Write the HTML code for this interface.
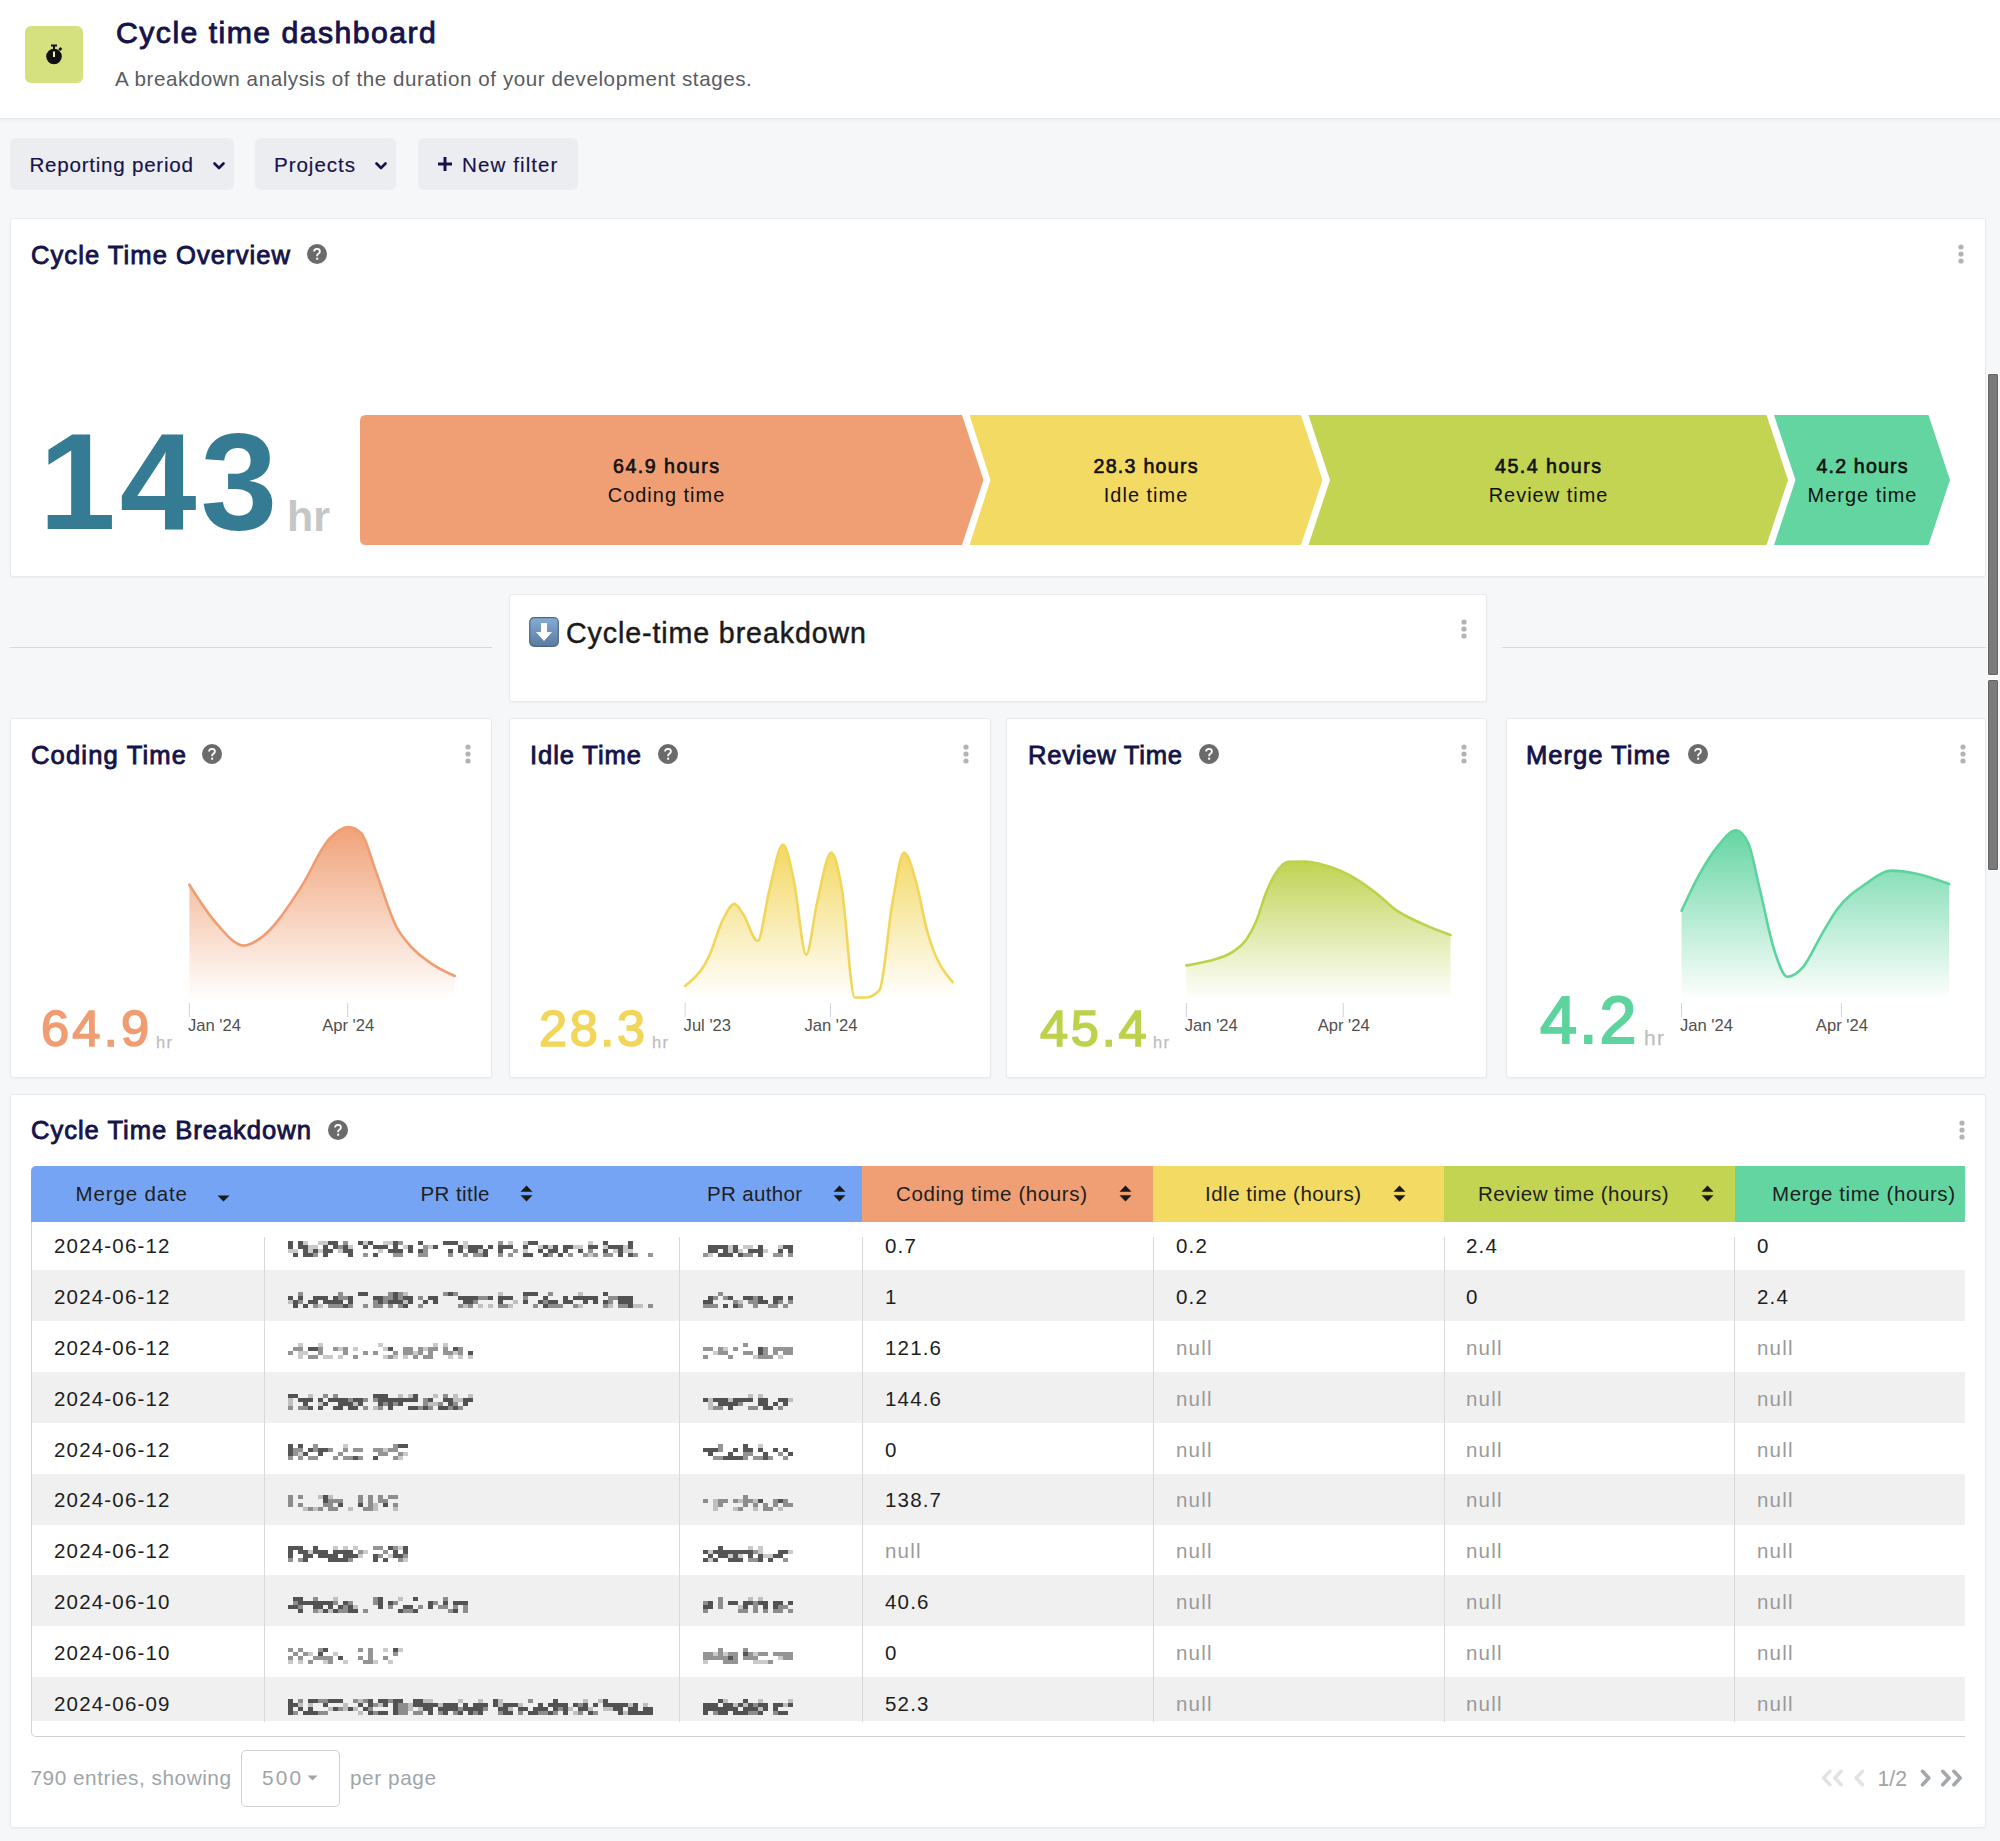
<!DOCTYPE html>
<html><head><meta charset="utf-8"><title>Cycle time dashboard</title><style>
*{margin:0;padding:0;box-sizing:border-box}
html,body{width:2000px;height:1841px;overflow:hidden;background:#f6f7f9;font-family:"Liberation Sans",sans-serif}
.t{position:absolute;white-space:nowrap}
.r{position:absolute}
.card{position:absolute;background:#fff;border:1px solid #e9eaed;border-radius:3px;box-shadow:0 1px 2px rgba(0,0,0,0.04)}
.blur{filter:blur(1.1px)}
</style></head><body>
<div class="r" style="left:0px;top:0px;width:2000px;height:118.5px;background:#fff;border-bottom:1px solid #e5e6e8;box-shadow:0 2px 4px rgba(0,0,0,0.04)"></div>
<div class="r" style="left:25px;top:26px;width:58px;height:57px;background:#d5e07f;border-radius:6px"></div>
<svg class="r" style="left:44px;top:43px" width="20" height="24" viewBox="0 0 20 24"><rect x="7" y="1.5" width="6" height="2" fill="#111"/><rect x="9" y="3" width="2" height="3" fill="#111"/><circle cx="10" cy="13.5" r="7.8" fill="#111"/><path d="M15.2 7.2 L17.4 5" stroke="#111" stroke-width="2.6"/><rect x="9" y="8.5" width="2" height="5.5" fill="#e9edc8"/></svg>
<div class="t" style="left:116.00px;top:18.24px;font-size:30.20px;line-height:30.20px;color:#15134a;font-weight:400;letter-spacing:1.469px;-webkit-text-stroke:0.9px #15134a;">Cycle time dashboard</div>
<div class="t" style="left:115.00px;top:69.16px;font-size:20.60px;line-height:20.60px;color:#585c62;font-weight:400;letter-spacing:0.568px;">A breakdown analysis of the duration of your development stages.</div>
<div class="r" style="left:10px;top:138px;width:224px;height:52px;background:#ecedf0;border-radius:6px"></div>
<div class="t" style="left:29.50px;top:154.66px;font-size:20.60px;line-height:20.60px;color:#15134a;font-weight:400;letter-spacing:0.746px;-webkit-text-stroke:0.15px #15134a;">Reporting period</div>
<svg class="r" style="left:212.5px;top:161.5px" width="12" height="8" viewBox="0 0 12 8"><path d="M1.5 1.5 L6 6 L10.5 1.5" fill="none" stroke="#15134a" stroke-width="2.6" stroke-linecap="round" stroke-linejoin="round"/></svg>
<div class="r" style="left:255px;top:138px;width:141px;height:52px;background:#ecedf0;border-radius:6px"></div>
<div class="t" style="left:274.00px;top:154.66px;font-size:20.60px;line-height:20.60px;color:#15134a;font-weight:400;letter-spacing:0.941px;-webkit-text-stroke:0.15px #15134a;">Projects</div>
<svg class="r" style="left:374.5px;top:161.5px" width="12" height="8" viewBox="0 0 12 8"><path d="M1.5 1.5 L6 6 L10.5 1.5" fill="none" stroke="#15134a" stroke-width="2.6" stroke-linecap="round" stroke-linejoin="round"/></svg>
<div class="r" style="left:418px;top:138px;width:160px;height:52px;background:#ecedf0;border-radius:6px"></div>
<svg class="r" style="left:437px;top:156px" width="16" height="16" viewBox="0 0 16 16"><path d="M8 1 V15 M1 8 H15" stroke="#15134a" stroke-width="3"/></svg>
<div class="t" style="left:462.00px;top:154.66px;font-size:20.60px;line-height:20.60px;color:#15134a;font-weight:400;letter-spacing:1.072px;-webkit-text-stroke:0.15px #15134a;">New filter</div>
<div class="card" style="left:9.5px;top:217.5px;width:1976.5px;height:359.5px"></div>
<div class="t" style="left:31.00px;top:242.53px;font-size:25.60px;line-height:25.60px;color:#15134a;font-weight:400;letter-spacing:1.033px;-webkit-text-stroke:0.85px #15134a;">Cycle Time Overview</div>
<svg class="r" style="left:307px;top:244px" width="20" height="20" viewBox="0 0 20 20"><circle cx="10" cy="10" r="10" fill="#6b6b6b"/><path d="M7.1 7.6 C7.1 5.9 8.4 4.9 10 4.9 C11.7 4.9 12.9 5.9 12.9 7.4 C12.9 8.6 12.2 9.2 11.3 9.8 C10.5 10.3 10.2 10.7 10.2 11.6 L10.2 12.2" fill="none" stroke="#fff" stroke-width="1.8"/><rect x="9.15" y="13.7" width="2" height="2" fill="#fff"/></svg>
<svg class="r" style="left:1957px;top:243px" width="8" height="22" viewBox="0 0 8 22"><circle cx="4" cy="4" r="2.6" fill="#b3b3b3"/><circle cx="4" cy="11" r="2.6" fill="#b3b3b3"/><circle cx="4" cy="18" r="2.6" fill="#b3b3b3"/></svg>
<div class="t" style="left:39.00px;top:412.28px;font-size:138.00px;line-height:138.00px;color:#347b93;font-weight:700;letter-spacing:4px;">143</div>
<div class="t" style="left:287.00px;top:495.20px;font-size:43.00px;line-height:43.00px;color:#c6c6c6;font-weight:700;">hr</div>
<svg class="r" style="left:0;top:0" width="2000" height="600" viewBox="0 0 2000 600"><path d="M366,415 L962,415 L983.5,480 L962,545 L366,545 Q360,545 360,539 L360,421 Q360,415 366,415 Z" fill="#f09f74"/><polygon points="969.5,415 1301,415 1322.5,480 1301,545 969.5,545 990.5,480" fill="#f3da62"/><polygon points="1308.5,415 1766.5,415 1788,480 1766.5,545 1308.5,545 1330,480" fill="#c2d452"/><polygon points="1774,415 1928.5,415 1950,480 1928.5,545 1774,545 1795.5,480" fill="#62d5a0"/></svg>
<div class="t" style="left:366.74px;width:600px;text-align:center;top:456.51px;font-size:19.60px;line-height:19.60px;color:#111;font-weight:400;letter-spacing:1.486px;-webkit-text-stroke:0.65px #111;">64.9 hours</div>
<div class="t" style="left:366.52px;width:600px;text-align:center;top:486.25px;font-size:19.90px;line-height:19.90px;color:#111;font-weight:400;letter-spacing:1.0311734375000015px;">Coding time</div>
<div class="t" style="left:846.13px;width:600px;text-align:center;top:456.51px;font-size:19.60px;line-height:19.60px;color:#111;font-weight:400;letter-spacing:1.264px;-webkit-text-stroke:0.65px #111;">28.3 hours</div>
<div class="t" style="left:846.02px;width:600px;text-align:center;top:486.25px;font-size:19.90px;line-height:19.90px;color:#111;font-weight:400;letter-spacing:1.0311734375000015px;">Idle time</div>
<div class="t" style="left:1248.74px;width:600px;text-align:center;top:456.51px;font-size:19.60px;line-height:19.60px;color:#111;font-weight:400;letter-spacing:1.486px;-webkit-text-stroke:0.65px #111;">45.4 hours</div>
<div class="t" style="left:1248.52px;width:600px;text-align:center;top:486.25px;font-size:19.90px;line-height:19.90px;color:#111;font-weight:400;letter-spacing:1.0311734375000015px;">Review time</div>
<div class="t" style="left:1562.58px;width:600px;text-align:center;top:456.51px;font-size:19.60px;line-height:19.60px;color:#111;font-weight:400;letter-spacing:1.16px;-webkit-text-stroke:0.65px #111;">4.2 hours</div>
<div class="t" style="left:1562.52px;width:600px;text-align:center;top:486.25px;font-size:19.90px;line-height:19.90px;color:#111;font-weight:400;letter-spacing:1.0311734375000015px;">Merge time</div>
<div class="r" style="left:10px;top:647px;width:482px;height:1px;background:#d6d8dc"></div>
<div class="r" style="left:1502px;top:647px;width:484px;height:1px;background:#d6d8dc"></div>
<div class="card" style="left:508.5px;top:593.5px;width:978px;height:108px"></div>
<svg class="r" style="left:529px;top:617px" width="30" height="30" viewBox="0 0 30 30"><defs><linearGradient id="eg" x1="0" y1="0" x2="0" y2="1"><stop offset="0" stop-color="#86acd6"/><stop offset="1" stop-color="#5a7b9e"/></linearGradient></defs><rect x="0.7" y="0.7" width="28.6" height="28.6" rx="4.5" fill="url(#eg)" stroke="#4a6785" stroke-width="1.2"/><path d="M12 6 H18 V15 H23 L15 24 L7 15 H12 Z" fill="#fff"/></svg>
<div class="t" style="left:566.00px;top:619.39px;font-size:28.60px;line-height:28.60px;color:#1a1a1a;font-weight:400;letter-spacing:0.898px;-webkit-text-stroke:0.45px #1a1a1a;">Cycle-time breakdown</div>
<svg class="r" style="left:1460px;top:618px" width="8" height="22" viewBox="0 0 8 22"><circle cx="4" cy="4" r="2.6" fill="#b3b3b3"/><circle cx="4" cy="11" r="2.6" fill="#b3b3b3"/><circle cx="4" cy="18" r="2.6" fill="#b3b3b3"/></svg>
<div class="card" style="left:9.5px;top:718px;width:482.5px;height:359.5px"></div>
<div class="t" style="left:31.00px;top:742.68px;font-size:25.60px;line-height:25.60px;color:#15134a;font-weight:400;letter-spacing:1.128px;-webkit-text-stroke:0.85px #15134a;">Coding Time</div>
<svg class="r" style="left:202px;top:744px" width="20" height="20" viewBox="0 0 20 20"><circle cx="10" cy="10" r="10" fill="#6b6b6b"/><path d="M7.1 7.6 C7.1 5.9 8.4 4.9 10 4.9 C11.7 4.9 12.9 5.9 12.9 7.4 C12.9 8.6 12.2 9.2 11.3 9.8 C10.5 10.3 10.2 10.7 10.2 11.6 L10.2 12.2" fill="none" stroke="#fff" stroke-width="1.8"/><rect x="9.15" y="13.7" width="2" height="2" fill="#fff"/></svg>
<svg class="r" style="left:463.5px;top:743px" width="8" height="22" viewBox="0 0 8 22"><circle cx="4" cy="4" r="2.6" fill="#b3b3b3"/><circle cx="4" cy="11" r="2.6" fill="#b3b3b3"/><circle cx="4" cy="18" r="2.6" fill="#b3b3b3"/></svg>
<svg class="r" style="left:0;top:0" width="2000" height="1100" viewBox="0 0 2000 1100"><defs><linearGradient id="g0" gradientUnits="userSpaceOnUse" x1="0" y1="827.1" x2="0" y2="1000"><stop offset="0" stop-color="#ef9d71" stop-opacity="0.95"/><stop offset="1" stop-color="#ef9d71" stop-opacity="0"/></linearGradient></defs><path d="M189.4,884.7 C198.3,898.9 207.3,913.0 216.2,923.1 C225.4,933.5 234.6,945.6 243.8,945.6 C249.6,945.6 255.4,941.7 261.2,937.6 C274.2,928.4 287.3,908.0 300.3,888.3 C310.0,873.7 319.6,849.2 329.3,839.0 C335.6,832.4 341.9,827.1 348.2,827.1 C352.5,827.1 356.9,829.1 361.2,833.2 C366.0,837.7 370.9,858.1 375.7,870.9 C382.5,888.8 389.2,912.8 396.0,926.0 C401.3,936.4 406.7,941.7 412.0,947.7 C419.2,955.8 426.5,960.3 433.7,965.1 C440.7,969.7 447.8,972.9 454.8,976.0 L454.8,1000 L189.4,1000 Z" fill="url(#g0)"/><path d="M189.4,884.7 C198.3,898.9 207.3,913.0 216.2,923.1 C225.4,933.5 234.6,945.6 243.8,945.6 C249.6,945.6 255.4,941.7 261.2,937.6 C274.2,928.4 287.3,908.0 300.3,888.3 C310.0,873.7 319.6,849.2 329.3,839.0 C335.6,832.4 341.9,827.1 348.2,827.1 C352.5,827.1 356.9,829.1 361.2,833.2 C366.0,837.7 370.9,858.1 375.7,870.9 C382.5,888.8 389.2,912.8 396.0,926.0 C401.3,936.4 406.7,941.7 412.0,947.7 C419.2,955.8 426.5,960.3 433.7,965.1 C440.7,969.7 447.8,972.9 454.8,976.0" fill="none" stroke="#ef9d71" stroke-width="2.6" stroke-linecap="round"/><rect x="188.9" y="1003" width="1" height="14" fill="#cfd1e6"/><rect x="347.2" y="1003" width="1" height="14" fill="#cfd1e6"/></svg>
<div class="t" style="left:187.90px;top:1018.05px;font-size:16.60px;line-height:16.60px;color:#505050;font-weight:400;">Jan '24</div>
<div class="t" style="left:48.20px;width:600px;text-align:center;top:1018.05px;font-size:16.60px;line-height:16.60px;color:#505050;font-weight:400;">Apr '24</div>
<div class="t" style="left:41.00px;top:1004.35px;font-size:50.50px;line-height:50.50px;color:#ef9d71;font-weight:400;letter-spacing:3.237px;-webkit-text-stroke:1.6px #ef9d71;">64.9</div>
<div class="t" style="left:156.00px;top:1034.13px;font-size:16.50px;line-height:16.50px;color:#bdbdbd;font-weight:400;letter-spacing:1.328px;-webkit-text-stroke:0.25px #bdbdbd;">hr</div>
<div class="card" style="left:508.5px;top:718px;width:482.5px;height:359.5px"></div>
<div class="t" style="left:530.00px;top:742.68px;font-size:25.60px;line-height:25.60px;color:#15134a;font-weight:400;letter-spacing:0.892px;-webkit-text-stroke:0.85px #15134a;">Idle Time</div>
<svg class="r" style="left:657.5px;top:744px" width="20" height="20" viewBox="0 0 20 20"><circle cx="10" cy="10" r="10" fill="#6b6b6b"/><path d="M7.1 7.6 C7.1 5.9 8.4 4.9 10 4.9 C11.7 4.9 12.9 5.9 12.9 7.4 C12.9 8.6 12.2 9.2 11.3 9.8 C10.5 10.3 10.2 10.7 10.2 11.6 L10.2 12.2" fill="none" stroke="#fff" stroke-width="1.8"/><rect x="9.15" y="13.7" width="2" height="2" fill="#fff"/></svg>
<svg class="r" style="left:962px;top:743px" width="8" height="22" viewBox="0 0 8 22"><circle cx="4" cy="4" r="2.6" fill="#b3b3b3"/><circle cx="4" cy="11" r="2.6" fill="#b3b3b3"/><circle cx="4" cy="18" r="2.6" fill="#b3b3b3"/></svg>
<svg class="r" style="left:0;top:0" width="2000" height="1100" viewBox="0 0 2000 1100"><defs><linearGradient id="g1" gradientUnits="userSpaceOnUse" x1="0" y1="844.5" x2="0" y2="1000"><stop offset="0" stop-color="#f2d65a" stop-opacity="0.95"/><stop offset="1" stop-color="#f2d65a" stop-opacity="0"/></linearGradient></defs><path d="M685.1,985.9 C693.1,979.5 701.1,973.2 709.1,956.1 C713.7,946.4 718.2,928.8 722.8,919.9 C726.7,912.3 730.5,903.9 734.4,903.9 C737.3,903.9 740.2,910.0 743.1,914.1 C747.9,921.0 752.8,940.9 757.6,940.9 C761.5,940.9 765.3,905.9 769.2,890.9 C773.8,873.1 778.4,844.5 783.0,844.5 C786.6,844.5 790.3,864.0 793.9,880.7 C798.0,899.5 802.1,954.7 806.2,954.7 C809.8,954.7 813.5,917.9 817.1,902.5 C821.8,882.4 826.6,852.5 831.3,852.5 C834.8,852.5 838.2,868.6 841.7,888.0 C846.1,912.5 850.4,997.5 854.8,997.5 C858.7,997.5 862.5,997.5 866.4,997.5 C870.7,997.5 875.1,995.1 879.4,990.2 C883.8,985.3 888.1,926.2 892.5,902.5 C896.4,881.5 900.2,852.5 904.1,852.5 C908.0,852.5 911.8,867.5 915.7,880.7 C919.6,893.9 923.4,917.5 927.3,931.5 C935.8,962.3 944.2,972.2 952.7,982.2 L952.7,1000 L685.1,1000 Z" fill="url(#g1)"/><path d="M685.1,985.9 C693.1,979.5 701.1,973.2 709.1,956.1 C713.7,946.4 718.2,928.8 722.8,919.9 C726.7,912.3 730.5,903.9 734.4,903.9 C737.3,903.9 740.2,910.0 743.1,914.1 C747.9,921.0 752.8,940.9 757.6,940.9 C761.5,940.9 765.3,905.9 769.2,890.9 C773.8,873.1 778.4,844.5 783.0,844.5 C786.6,844.5 790.3,864.0 793.9,880.7 C798.0,899.5 802.1,954.7 806.2,954.7 C809.8,954.7 813.5,917.9 817.1,902.5 C821.8,882.4 826.6,852.5 831.3,852.5 C834.8,852.5 838.2,868.6 841.7,888.0 C846.1,912.5 850.4,997.5 854.8,997.5 C858.7,997.5 862.5,997.5 866.4,997.5 C870.7,997.5 875.1,995.1 879.4,990.2 C883.8,985.3 888.1,926.2 892.5,902.5 C896.4,881.5 900.2,852.5 904.1,852.5 C908.0,852.5 911.8,867.5 915.7,880.7 C919.6,893.9 923.4,917.5 927.3,931.5 C935.8,962.3 944.2,972.2 952.7,982.2" fill="none" stroke="#f2d65a" stroke-width="2.6" stroke-linecap="round"/><rect x="684.6" y="1003" width="1" height="14" fill="#cfd1e6"/><rect x="829.9" y="1003" width="1" height="14" fill="#cfd1e6"/></svg>
<div class="t" style="left:683.60px;top:1018.05px;font-size:16.60px;line-height:16.60px;color:#505050;font-weight:400;">Jul '23</div>
<div class="t" style="left:530.90px;width:600px;text-align:center;top:1018.05px;font-size:16.60px;line-height:16.60px;color:#505050;font-weight:400;">Jan '24</div>
<div class="t" style="left:539.00px;top:1004.35px;font-size:50.50px;line-height:50.50px;color:#f2d65a;font-weight:400;letter-spacing:2.57px;-webkit-text-stroke:1.6px #f2d65a;">28.3</div>
<div class="t" style="left:652.00px;top:1034.13px;font-size:16.50px;line-height:16.50px;color:#bdbdbd;font-weight:400;letter-spacing:1.328px;-webkit-text-stroke:0.25px #bdbdbd;">hr</div>
<div class="card" style="left:1006px;top:718px;width:481px;height:359.5px"></div>
<div class="t" style="left:1028.00px;top:742.68px;font-size:25.60px;line-height:25.60px;color:#15134a;font-weight:400;letter-spacing:0.747px;-webkit-text-stroke:0.85px #15134a;">Review Time</div>
<svg class="r" style="left:1198.75px;top:744px" width="20" height="20" viewBox="0 0 20 20"><circle cx="10" cy="10" r="10" fill="#6b6b6b"/><path d="M7.1 7.6 C7.1 5.9 8.4 4.9 10 4.9 C11.7 4.9 12.9 5.9 12.9 7.4 C12.9 8.6 12.2 9.2 11.3 9.8 C10.5 10.3 10.2 10.7 10.2 11.6 L10.2 12.2" fill="none" stroke="#fff" stroke-width="1.8"/><rect x="9.15" y="13.7" width="2" height="2" fill="#fff"/></svg>
<svg class="r" style="left:1460px;top:743px" width="8" height="22" viewBox="0 0 8 22"><circle cx="4" cy="4" r="2.6" fill="#b3b3b3"/><circle cx="4" cy="11" r="2.6" fill="#b3b3b3"/><circle cx="4" cy="18" r="2.6" fill="#b3b3b3"/></svg>
<svg class="r" style="left:0;top:0" width="2000" height="1100" viewBox="0 0 2000 1100"><defs><linearGradient id="g2" gradientUnits="userSpaceOnUse" x1="0" y1="861.5" x2="0" y2="1000"><stop offset="0" stop-color="#bdd14a" stop-opacity="0.95"/><stop offset="1" stop-color="#bdd14a" stop-opacity="0"/></linearGradient></defs><path d="M1186.3,965.4 C1193.6,964.3 1201.0,963.2 1208.3,961.1 C1216.5,958.8 1224.8,957.5 1233.0,951.6 C1237.3,948.5 1241.7,946.2 1246.0,940.0 C1249.4,935.2 1252.8,929.2 1256.2,921.2 C1259.6,913.3 1262.9,900.4 1266.3,892.2 C1269.7,883.9 1273.1,876.9 1276.5,871.9 C1280.4,866.2 1284.2,861.8 1288.1,861.7 C1293.9,861.6 1299.7,861.5 1305.5,861.5 C1310.3,861.5 1315.2,862.8 1320.0,863.9 C1329.7,866.2 1339.3,869.7 1349.0,874.8 C1357.7,879.4 1366.4,885.5 1375.1,892.2 C1381.9,897.4 1388.6,904.8 1395.4,909.6 C1404.1,915.8 1412.8,919.3 1421.5,923.4 C1431.2,927.9 1440.8,931.5 1450.5,935.0 L1450.5,1000 L1186.3,1000 Z" fill="url(#g2)"/><path d="M1186.3,965.4 C1193.6,964.3 1201.0,963.2 1208.3,961.1 C1216.5,958.8 1224.8,957.5 1233.0,951.6 C1237.3,948.5 1241.7,946.2 1246.0,940.0 C1249.4,935.2 1252.8,929.2 1256.2,921.2 C1259.6,913.3 1262.9,900.4 1266.3,892.2 C1269.7,883.9 1273.1,876.9 1276.5,871.9 C1280.4,866.2 1284.2,861.8 1288.1,861.7 C1293.9,861.6 1299.7,861.5 1305.5,861.5 C1310.3,861.5 1315.2,862.8 1320.0,863.9 C1329.7,866.2 1339.3,869.7 1349.0,874.8 C1357.7,879.4 1366.4,885.5 1375.1,892.2 C1381.9,897.4 1388.6,904.8 1395.4,909.6 C1404.1,915.8 1412.8,919.3 1421.5,923.4 C1431.2,927.9 1440.8,931.5 1450.5,935.0" fill="none" stroke="#bdd14a" stroke-width="2.6" stroke-linecap="round"/><rect x="1185.8" y="1003" width="1" height="14" fill="#cfd1e6"/><rect x="1342.7" y="1003" width="1" height="14" fill="#cfd1e6"/></svg>
<div class="t" style="left:1184.80px;top:1018.05px;font-size:16.60px;line-height:16.60px;color:#505050;font-weight:400;">Jan '24</div>
<div class="t" style="left:1043.70px;width:600px;text-align:center;top:1018.05px;font-size:16.60px;line-height:16.60px;color:#505050;font-weight:400;">Apr '24</div>
<div class="t" style="left:1040.00px;top:1004.35px;font-size:50.50px;line-height:50.50px;color:#bdd14a;font-weight:400;letter-spacing:2.737px;-webkit-text-stroke:1.6px #bdd14a;">45.4</div>
<div class="t" style="left:1153.00px;top:1034.13px;font-size:16.50px;line-height:16.50px;color:#bdbdbd;font-weight:400;letter-spacing:1.328px;-webkit-text-stroke:0.25px #bdbdbd;">hr</div>
<div class="card" style="left:1505.5px;top:718px;width:480.5px;height:359.5px"></div>
<div class="t" style="left:1526.00px;top:742.68px;font-size:25.60px;line-height:25.60px;color:#15134a;font-weight:400;letter-spacing:0.983px;-webkit-text-stroke:0.85px #15134a;">Merge Time</div>
<svg class="r" style="left:1687.5px;top:744px" width="20" height="20" viewBox="0 0 20 20"><circle cx="10" cy="10" r="10" fill="#6b6b6b"/><path d="M7.1 7.6 C7.1 5.9 8.4 4.9 10 4.9 C11.7 4.9 12.9 5.9 12.9 7.4 C12.9 8.6 12.2 9.2 11.3 9.8 C10.5 10.3 10.2 10.7 10.2 11.6 L10.2 12.2" fill="none" stroke="#fff" stroke-width="1.8"/><rect x="9.15" y="13.7" width="2" height="2" fill="#fff"/></svg>
<svg class="r" style="left:1959px;top:743px" width="8" height="22" viewBox="0 0 8 22"><circle cx="4" cy="4" r="2.6" fill="#b3b3b3"/><circle cx="4" cy="11" r="2.6" fill="#b3b3b3"/><circle cx="4" cy="18" r="2.6" fill="#b3b3b3"/></svg>
<svg class="r" style="left:0;top:0" width="2000" height="1100" viewBox="0 0 2000 1100"><defs><linearGradient id="g3" gradientUnits="userSpaceOnUse" x1="0" y1="830.3" x2="0" y2="1000"><stop offset="0" stop-color="#5dd39e" stop-opacity="0.95"/><stop offset="1" stop-color="#5dd39e" stop-opacity="0"/></linearGradient></defs><path d="M1681.6,910.8 C1687.4,898.2 1693.2,885.7 1699.0,875.2 C1705.3,863.9 1711.5,853.7 1717.8,846.2 C1723.9,838.9 1729.9,830.3 1736.0,830.3 C1740.1,830.3 1744.2,834.6 1748.3,843.3 C1752.2,851.5 1756.0,873.9 1759.9,889.7 C1764.7,909.5 1769.6,935.9 1774.4,950.6 C1778.7,963.8 1783.1,976.7 1787.4,976.7 C1792.7,976.7 1798.1,972.8 1803.4,966.6 C1809.2,959.8 1815.0,945.9 1820.8,936.1 C1826.1,927.1 1831.4,917.3 1836.7,910.0 C1846.4,896.7 1856.0,890.6 1865.7,883.9 C1874.4,877.9 1883.1,870.6 1891.8,870.6 C1900.0,870.6 1908.3,872.1 1916.5,873.8 C1927.4,876.1 1938.2,880.0 1949.1,884.0 L1949.1,1000 L1681.6,1000 Z" fill="url(#g3)"/><path d="M1681.6,910.8 C1687.4,898.2 1693.2,885.7 1699.0,875.2 C1705.3,863.9 1711.5,853.7 1717.8,846.2 C1723.9,838.9 1729.9,830.3 1736.0,830.3 C1740.1,830.3 1744.2,834.6 1748.3,843.3 C1752.2,851.5 1756.0,873.9 1759.9,889.7 C1764.7,909.5 1769.6,935.9 1774.4,950.6 C1778.7,963.8 1783.1,976.7 1787.4,976.7 C1792.7,976.7 1798.1,972.8 1803.4,966.6 C1809.2,959.8 1815.0,945.9 1820.8,936.1 C1826.1,927.1 1831.4,917.3 1836.7,910.0 C1846.4,896.7 1856.0,890.6 1865.7,883.9 C1874.4,877.9 1883.1,870.6 1891.8,870.6 C1900.0,870.6 1908.3,872.1 1916.5,873.8 C1927.4,876.1 1938.2,880.0 1949.1,884.0" fill="none" stroke="#5dd39e" stroke-width="2.6" stroke-linecap="round"/><rect x="1681.0" y="1003" width="1" height="14" fill="#cfd1e6"/><rect x="1840.9" y="1003" width="1" height="14" fill="#cfd1e6"/></svg>
<div class="t" style="left:1680.00px;top:1018.05px;font-size:16.60px;line-height:16.60px;color:#505050;font-weight:400;">Jan '24</div>
<div class="t" style="left:1541.90px;width:600px;text-align:center;top:1018.05px;font-size:16.60px;line-height:16.60px;color:#505050;font-weight:400;">Apr '24</div>
<div class="t" style="left:1540.00px;top:987.31px;font-size:66.50px;line-height:66.50px;color:#5dd39e;font-weight:400;letter-spacing:2.027px;-webkit-text-stroke:2px #5dd39e;">4.2</div>
<div class="t" style="left:1644.00px;top:1026.82px;font-size:21.00px;line-height:21.00px;color:#bdbdbd;font-weight:400;letter-spacing:1.326px;-webkit-text-stroke:0.25px #bdbdbd;">hr</div>
<div class="card" style="left:9.5px;top:1093.5px;width:1976px;height:734px"></div>
<div class="t" style="left:31.00px;top:1117.93px;font-size:25.60px;line-height:25.60px;color:#15134a;font-weight:400;letter-spacing:0.958px;-webkit-text-stroke:0.85px #15134a;">Cycle Time Breakdown</div>
<svg class="r" style="left:327.5px;top:1120px" width="20" height="20" viewBox="0 0 20 20"><circle cx="10" cy="10" r="10" fill="#6b6b6b"/><path d="M7.1 7.6 C7.1 5.9 8.4 4.9 10 4.9 C11.7 4.9 12.9 5.9 12.9 7.4 C12.9 8.6 12.2 9.2 11.3 9.8 C10.5 10.3 10.2 10.7 10.2 11.6 L10.2 12.2" fill="none" stroke="#fff" stroke-width="1.8"/><rect x="9.15" y="13.7" width="2" height="2" fill="#fff"/></svg>
<svg class="r" style="left:1957.5px;top:1119px" width="8" height="22" viewBox="0 0 8 22"><circle cx="4" cy="4" r="2.6" fill="#b3b3b3"/><circle cx="4" cy="11" r="2.6" fill="#b3b3b3"/><circle cx="4" cy="18" r="2.6" fill="#b3b3b3"/></svg>
<div class="r" style="left:31px;top:1165.5px;width:831px;height:56.5px;background:#74a4f3;border-top-left-radius:5px;"></div>
<div class="r" style="left:862px;top:1165.5px;width:291px;height:56.5px;background:#f09f74;"></div>
<div class="r" style="left:1153px;top:1165.5px;width:291px;height:56.5px;background:#f3da62;"></div>
<div class="r" style="left:1444px;top:1165.5px;width:291px;height:56.5px;background:#c2d452;"></div>
<div class="r" style="left:1735px;top:1165.5px;width:230px;height:56.5px;background:#62d5a0;"></div>
<div class="t" style="left:75.50px;top:1183.75px;font-size:20.50px;line-height:20.50px;color:#1e1e1e;font-weight:400;letter-spacing:0.866px;">Merge date</div>
<svg class="r" style="left:217px;top:1195px" width="13" height="7" viewBox="0 0 13 7"><path d="M0.5 0.5 L12.5 0.5 L6.5 6.5 Z" fill="#1a1a1a"/></svg>
<div class="t" style="left:420.50px;top:1183.75px;font-size:20.50px;line-height:20.50px;color:#1e1e1e;font-weight:400;letter-spacing:0.418px;">PR title</div>
<svg class="r" style="left:520px;top:1184.7px" width="13" height="17" viewBox="0 0 13 17"><path d="M6.5 0.5 L12.5 6.8 L0.5 6.8 Z M6.5 16.5 L12.5 10.2 L0.5 10.2 Z" fill="#1a1a1a"/></svg>
<div class="t" style="left:707.00px;top:1183.75px;font-size:20.50px;line-height:20.50px;color:#1e1e1e;font-weight:400;letter-spacing:0.337px;">PR author</div>
<svg class="r" style="left:833px;top:1184.7px" width="13" height="17" viewBox="0 0 13 17"><path d="M6.5 0.5 L12.5 6.8 L0.5 6.8 Z M6.5 16.5 L12.5 10.2 L0.5 10.2 Z" fill="#1a1a1a"/></svg>
<div class="t" style="left:896.00px;top:1183.75px;font-size:20.50px;line-height:20.50px;color:#1e1e1e;font-weight:400;letter-spacing:0.61px;">Coding time (hours)</div>
<svg class="r" style="left:1118.5px;top:1184.7px" width="13" height="17" viewBox="0 0 13 17"><path d="M6.5 0.5 L12.5 6.8 L0.5 6.8 Z M6.5 16.5 L12.5 10.2 L0.5 10.2 Z" fill="#1a1a1a"/></svg>
<div class="t" style="left:1205.00px;top:1183.75px;font-size:20.50px;line-height:20.50px;color:#1e1e1e;font-weight:400;letter-spacing:0.493px;">Idle time (hours)</div>
<svg class="r" style="left:1392.5px;top:1184.7px" width="13" height="17" viewBox="0 0 13 17"><path d="M6.5 0.5 L12.5 6.8 L0.5 6.8 Z M6.5 16.5 L12.5 10.2 L0.5 10.2 Z" fill="#1a1a1a"/></svg>
<div class="t" style="left:1478.00px;top:1183.75px;font-size:20.50px;line-height:20.50px;color:#1e1e1e;font-weight:400;letter-spacing:0.457px;">Review time (hours)</div>
<svg class="r" style="left:1700.5px;top:1184.7px" width="13" height="17" viewBox="0 0 13 17"><path d="M6.5 0.5 L12.5 6.8 L0.5 6.8 Z M6.5 16.5 L12.5 10.2 L0.5 10.2 Z" fill="#1a1a1a"/></svg>
<div class="t" style="left:1772.00px;top:1183.75px;font-size:20.50px;line-height:20.50px;color:#1e1e1e;font-weight:400;letter-spacing:0.578px;">Merge time (hours)</div>
<div class="r" style="left:31px;top:1222px;width:1934px;height:515px;border-left:1px solid #d4d4d4;border-bottom:1px solid #cfcfcf;border-bottom-left-radius:5px;overflow:hidden"></div>
<div class="r" style="left:32px;top:1270.3px;width:1933px;height:50.85px;background:#f0f0f0"></div>
<div class="r" style="left:32px;top:1372.0px;width:1933px;height:50.85px;background:#f0f0f0"></div>
<div class="r" style="left:32px;top:1473.7px;width:1933px;height:50.85px;background:#f0f0f0"></div>
<div class="r" style="left:32px;top:1575.4px;width:1933px;height:50.85px;background:#f0f0f0"></div>
<div class="r" style="left:32px;top:1677.1px;width:1933px;height:44.4px;background:#f0f0f0"></div>
<svg width="0" height="0" style="position:absolute"><defs><filter id="px" filterUnits="userSpaceOnUse" x="0" y="0" width="400" height="28"><feFlood x="1" y="1" width="1" height="1" flood-color="#000"/><feComposite x="0" y="0" width="3" height="3"/><feTile result="tl"/><feComposite in="SourceGraphic" in2="tl" operator="in"/><feMorphology operator="dilate" radius="1"/></filter></defs></svg>
<div class="r" style="left:263.5px;top:1237px;width:1px;height:484.5px;background:#d9d9d9"></div>
<div class="r" style="left:678.5px;top:1237px;width:1px;height:484.5px;background:#d9d9d9"></div>
<div class="r" style="left:861.5px;top:1237px;width:1px;height:484.5px;background:#d9d9d9"></div>
<div class="r" style="left:1152.5px;top:1237px;width:1px;height:484.5px;background:#d9d9d9"></div>
<div class="r" style="left:1443.5px;top:1237px;width:1px;height:484.5px;background:#d9d9d9"></div>
<div class="r" style="left:1733.5px;top:1237px;width:1px;height:484.5px;background:#d9d9d9"></div>
<div class="t" style="left:54.00px;top:1236.20px;font-size:20.50px;line-height:20.50px;color:#1e1e1e;font-weight:400;letter-spacing:1.1814322916666669px;">2024-06-12</div>
<svg class="r" style="left:288px;top:1237.0px" width="365" height="20"><g fill="#2a2a2a"><rect x="0" y="4" width="5" height="4" fill-opacity="0.8"/><rect x="10" y="4" width="5" height="4" fill-opacity="0.8"/><rect x="15" y="4" width="5" height="4" fill-opacity="0.25"/><rect x="30" y="4" width="10" height="4" fill-opacity="0.25"/><rect x="40" y="4" width="10" height="4" fill-opacity="0.8"/><rect x="55" y="4" width="5" height="4" fill-opacity="0.5"/><rect x="70" y="4" width="5" height="4" fill-opacity="0.8"/><rect x="75" y="4" width="5" height="4" fill-opacity="0.25"/><rect x="80" y="4" width="5" height="4" fill-opacity="0.8"/><rect x="95" y="4" width="10" height="4" fill-opacity="0.25"/><rect x="105" y="4" width="5" height="4" fill-opacity="0.8"/><rect x="110" y="4" width="5" height="4" fill-opacity="0.5"/><rect x="130" y="4" width="5" height="4" fill-opacity="0.8"/><rect x="155" y="4" width="15" height="4" fill-opacity="0.8"/><rect x="175" y="4" width="5" height="4" fill-opacity="0.25"/><rect x="210" y="4" width="5" height="4" fill-opacity="0.5"/><rect x="220" y="4" width="5" height="4" fill-opacity="0.25"/><rect x="235" y="4" width="5" height="4" fill-opacity="0.25"/><rect x="240" y="4" width="10" height="4" fill-opacity="0.8"/><rect x="300" y="4" width="5" height="4" fill-opacity="0.25"/><rect x="315" y="4" width="5" height="4" fill-opacity="0.8"/><rect x="340" y="4" width="5" height="4" fill-opacity="0.8"/><rect x="0" y="8" width="5" height="4" fill-opacity="0.8"/><rect x="10" y="8" width="10" height="4" fill-opacity="0.8"/><rect x="20" y="8" width="10" height="4" fill-opacity="0.25"/><rect x="35" y="8" width="5" height="4" fill-opacity="0.8"/><rect x="45" y="8" width="5" height="4" fill-opacity="0.8"/><rect x="50" y="8" width="5" height="4" fill-opacity="0.5"/><rect x="55" y="8" width="5" height="4" fill-opacity="0.8"/><rect x="60" y="8" width="5" height="4" fill-opacity="0.25"/><rect x="75" y="8" width="5" height="4" fill-opacity="0.8"/><rect x="85" y="8" width="15" height="4" fill-opacity="0.8"/><rect x="105" y="8" width="5" height="4" fill-opacity="0.8"/><rect x="115" y="8" width="5" height="4" fill-opacity="0.25"/><rect x="120" y="8" width="5" height="4" fill-opacity="0.8"/><rect x="135" y="8" width="5" height="4" fill-opacity="0.5"/><rect x="140" y="8" width="5" height="4" fill-opacity="0.25"/><rect x="145" y="8" width="5" height="4" fill-opacity="0.8"/><rect x="170" y="8" width="5" height="4" fill-opacity="0.8"/><rect x="175" y="8" width="5" height="4" fill-opacity="0.25"/><rect x="180" y="8" width="15" height="4" fill-opacity="0.8"/><rect x="200" y="8" width="5" height="4" fill-opacity="0.8"/><rect x="210" y="8" width="15" height="4" fill-opacity="0.8"/><rect x="235" y="8" width="5" height="4" fill-opacity="0.8"/><rect x="250" y="8" width="5" height="4" fill-opacity="0.25"/><rect x="255" y="8" width="5" height="4" fill-opacity="0.8"/><rect x="260" y="8" width="5" height="4" fill-opacity="0.25"/><rect x="265" y="8" width="5" height="4" fill-opacity="0.8"/><rect x="275" y="8" width="10" height="4" fill-opacity="0.8"/><rect x="285" y="8" width="10" height="4" fill-opacity="0.25"/><rect x="300" y="8" width="10" height="4" fill-opacity="0.8"/><rect x="315" y="8" width="5" height="4" fill-opacity="0.25"/><rect x="320" y="8" width="15" height="4" fill-opacity="0.8"/><rect x="335" y="8" width="5" height="4" fill-opacity="0.25"/><rect x="340" y="8" width="5" height="4" fill-opacity="0.8"/><rect x="0" y="12" width="10" height="4" fill-opacity="0.25"/><rect x="15" y="12" width="5" height="4" fill-opacity="0.8"/><rect x="20" y="12" width="5" height="4" fill-opacity="0.25"/><rect x="25" y="12" width="5" height="4" fill-opacity="0.8"/><rect x="30" y="12" width="5" height="4" fill-opacity="0.25"/><rect x="35" y="12" width="10" height="4" fill-opacity="0.8"/><rect x="50" y="12" width="5" height="4" fill-opacity="0.25"/><rect x="55" y="12" width="10" height="4" fill-opacity="0.8"/><rect x="90" y="12" width="5" height="4" fill-opacity="0.25"/><rect x="100" y="12" width="15" height="4" fill-opacity="0.8"/><rect x="120" y="12" width="5" height="4" fill-opacity="0.8"/><rect x="130" y="12" width="5" height="4" fill-opacity="0.8"/><rect x="135" y="12" width="5" height="4" fill-opacity="0.5"/><rect x="160" y="12" width="5" height="4" fill-opacity="0.8"/><rect x="170" y="12" width="5" height="4" fill-opacity="0.8"/><rect x="180" y="12" width="10" height="4" fill-opacity="0.8"/><rect x="190" y="12" width="5" height="4" fill-opacity="0.25"/><rect x="195" y="12" width="5" height="4" fill-opacity="0.8"/><rect x="210" y="12" width="5" height="4" fill-opacity="0.8"/><rect x="225" y="12" width="5" height="4" fill-opacity="0.5"/><rect x="235" y="12" width="5" height="4" fill-opacity="0.25"/><rect x="250" y="12" width="5" height="4" fill-opacity="0.8"/><rect x="260" y="12" width="10" height="4" fill-opacity="0.8"/><rect x="275" y="12" width="5" height="4" fill-opacity="0.8"/><rect x="290" y="12" width="5" height="4" fill-opacity="0.8"/><rect x="300" y="12" width="5" height="4" fill-opacity="0.5"/><rect x="315" y="12" width="5" height="4" fill-opacity="0.8"/><rect x="325" y="12" width="5" height="4" fill-opacity="0.25"/><rect x="330" y="12" width="5" height="4" fill-opacity="0.8"/><rect x="335" y="12" width="10" height="4" fill-opacity="0.25"/><rect x="5" y="16" width="5" height="4" fill-opacity="0.8"/><rect x="15" y="16" width="10" height="4" fill-opacity="0.8"/><rect x="25" y="16" width="5" height="4" fill-opacity="0.5"/><rect x="35" y="16" width="5" height="4" fill-opacity="0.8"/><rect x="60" y="16" width="5" height="4" fill-opacity="0.8"/><rect x="75" y="16" width="5" height="4" fill-opacity="0.5"/><rect x="85" y="16" width="5" height="4" fill-opacity="0.8"/><rect x="105" y="16" width="10" height="4" fill-opacity="0.5"/><rect x="130" y="16" width="10" height="4" fill-opacity="0.5"/><rect x="160" y="16" width="5" height="4" fill-opacity="0.5"/><rect x="175" y="16" width="5" height="4" fill-opacity="0.5"/><rect x="185" y="16" width="10" height="4" fill-opacity="0.5"/><rect x="195" y="16" width="5" height="4" fill-opacity="0.8"/><rect x="210" y="16" width="5" height="4" fill-opacity="0.5"/><rect x="220" y="16" width="5" height="4" fill-opacity="0.5"/><rect x="235" y="16" width="10" height="4" fill-opacity="0.8"/><rect x="255" y="16" width="5" height="4" fill-opacity="0.8"/><rect x="260" y="16" width="5" height="4" fill-opacity="0.5"/><rect x="270" y="16" width="5" height="4" fill-opacity="0.8"/><rect x="280" y="16" width="5" height="4" fill-opacity="0.5"/><rect x="295" y="16" width="5" height="4" fill-opacity="0.5"/><rect x="300" y="16" width="5" height="4" fill-opacity="0.25"/><rect x="305" y="16" width="5" height="4" fill-opacity="0.5"/><rect x="315" y="16" width="10" height="4" fill-opacity="0.5"/><rect x="330" y="16" width="5" height="4" fill-opacity="0.8"/><rect x="340" y="16" width="5" height="4" fill-opacity="0.8"/><rect x="345" y="16" width="5" height="4" fill-opacity="0.5"/><rect x="360" y="16" width="5" height="4" fill-opacity="0.5"/></g></svg>
<svg class="r" style="left:703px;top:1237.0px" width="90" height="20"><g fill="#2a2a2a"><rect x="5" y="8" width="20" height="4" fill-opacity="0.8"/><rect x="25" y="8" width="5" height="4" fill-opacity="0.25"/><rect x="30" y="8" width="5" height="4" fill-opacity="0.8"/><rect x="40" y="8" width="10" height="4" fill-opacity="0.25"/><rect x="55" y="8" width="5" height="4" fill-opacity="0.8"/><rect x="75" y="8" width="5" height="4" fill-opacity="0.25"/><rect x="80" y="8" width="10" height="4" fill-opacity="0.8"/><rect x="5" y="12" width="10" height="4" fill-opacity="0.8"/><rect x="20" y="12" width="5" height="4" fill-opacity="0.8"/><rect x="25" y="12" width="5" height="4" fill-opacity="0.25"/><rect x="30" y="12" width="5" height="4" fill-opacity="0.8"/><rect x="35" y="12" width="5" height="4" fill-opacity="0.25"/><rect x="45" y="12" width="15" height="4" fill-opacity="0.8"/><rect x="60" y="12" width="5" height="4" fill-opacity="0.25"/><rect x="75" y="12" width="5" height="4" fill-opacity="0.8"/><rect x="85" y="12" width="5" height="4" fill-opacity="0.8"/><rect x="0" y="16" width="5" height="4" fill-opacity="0.5"/><rect x="5" y="16" width="5" height="4" fill-opacity="0.25"/><rect x="15" y="16" width="15" height="4" fill-opacity="0.8"/><rect x="35" y="16" width="5" height="4" fill-opacity="0.8"/><rect x="40" y="16" width="10" height="4" fill-opacity="0.5"/><rect x="55" y="16" width="5" height="4" fill-opacity="0.8"/><rect x="70" y="16" width="10" height="4" fill-opacity="0.5"/><rect x="85" y="16" width="5" height="4" fill-opacity="0.5"/></g></svg>
<div class="t" style="left:885.00px;top:1236.20px;font-size:20.50px;line-height:20.50px;color:#1e1e1e;font-weight:400;letter-spacing:1.1814322916666669px;">0.7</div>
<div class="t" style="left:1176.00px;top:1236.20px;font-size:20.50px;line-height:20.50px;color:#1e1e1e;font-weight:400;letter-spacing:1.1814322916666669px;">0.2</div>
<div class="t" style="left:1466.00px;top:1236.20px;font-size:20.50px;line-height:20.50px;color:#1e1e1e;font-weight:400;letter-spacing:1.1814322916666669px;">2.4</div>
<div class="t" style="left:1757.00px;top:1236.20px;font-size:20.50px;line-height:20.50px;color:#1e1e1e;font-weight:400;letter-spacing:1.1814322916666669px;">0</div>
<div class="t" style="left:54.00px;top:1287.05px;font-size:20.50px;line-height:20.50px;color:#1e1e1e;font-weight:400;letter-spacing:1.1814322916666669px;">2024-06-12</div>
<svg class="r" style="left:288px;top:1287.8px" width="365" height="20"><g fill="#2a2a2a"><rect x="10" y="4" width="5" height="4" fill-opacity="0.5"/><rect x="50" y="4" width="5" height="4" fill-opacity="0.5"/><rect x="70" y="4" width="10" height="4" fill-opacity="0.8"/><rect x="100" y="4" width="5" height="4" fill-opacity="0.5"/><rect x="105" y="4" width="5" height="4" fill-opacity="0.8"/><rect x="110" y="4" width="5" height="4" fill-opacity="0.5"/><rect x="115" y="4" width="5" height="4" fill-opacity="0.25"/><rect x="155" y="4" width="5" height="4" fill-opacity="0.5"/><rect x="160" y="4" width="5" height="4" fill-opacity="0.8"/><rect x="165" y="4" width="5" height="4" fill-opacity="0.5"/><rect x="210" y="4" width="5" height="4" fill-opacity="0.25"/><rect x="235" y="4" width="15" height="4" fill-opacity="0.8"/><rect x="260" y="4" width="5" height="4" fill-opacity="0.5"/><rect x="290" y="4" width="5" height="4" fill-opacity="0.25"/><rect x="315" y="4" width="5" height="4" fill-opacity="0.8"/><rect x="0" y="8" width="5" height="4" fill-opacity="0.8"/><rect x="10" y="8" width="5" height="4" fill-opacity="0.8"/><rect x="25" y="8" width="15" height="4" fill-opacity="0.8"/><rect x="45" y="8" width="5" height="4" fill-opacity="0.8"/><rect x="50" y="8" width="10" height="4" fill-opacity="0.5"/><rect x="60" y="8" width="5" height="4" fill-opacity="0.8"/><rect x="85" y="8" width="10" height="4" fill-opacity="0.8"/><rect x="95" y="8" width="10" height="4" fill-opacity="0.5"/><rect x="105" y="8" width="5" height="4" fill-opacity="0.8"/><rect x="110" y="8" width="5" height="4" fill-opacity="0.5"/><rect x="115" y="8" width="10" height="4" fill-opacity="0.8"/><rect x="130" y="8" width="5" height="4" fill-opacity="0.5"/><rect x="140" y="8" width="10" height="4" fill-opacity="0.8"/><rect x="170" y="8" width="20" height="4" fill-opacity="0.8"/><rect x="190" y="8" width="10" height="4" fill-opacity="0.5"/><rect x="200" y="8" width="5" height="4" fill-opacity="0.8"/><rect x="210" y="8" width="15" height="4" fill-opacity="0.8"/><rect x="235" y="8" width="5" height="4" fill-opacity="0.5"/><rect x="255" y="8" width="5" height="4" fill-opacity="0.8"/><rect x="275" y="8" width="5" height="4" fill-opacity="0.8"/><rect x="285" y="8" width="25" height="4" fill-opacity="0.8"/><rect x="320" y="8" width="10" height="4" fill-opacity="0.5"/><rect x="330" y="8" width="15" height="4" fill-opacity="0.8"/><rect x="0" y="12" width="5" height="4" fill-opacity="0.25"/><rect x="5" y="12" width="5" height="4" fill-opacity="0.8"/><rect x="10" y="12" width="5" height="4" fill-opacity="0.5"/><rect x="20" y="12" width="10" height="4" fill-opacity="0.8"/><rect x="35" y="12" width="20" height="4" fill-opacity="0.8"/><rect x="60" y="12" width="5" height="4" fill-opacity="0.8"/><rect x="85" y="12" width="5" height="4" fill-opacity="0.5"/><rect x="90" y="12" width="5" height="4" fill-opacity="0.8"/><rect x="95" y="12" width="5" height="4" fill-opacity="0.5"/><rect x="100" y="12" width="15" height="4" fill-opacity="0.8"/><rect x="115" y="12" width="5" height="4" fill-opacity="0.25"/><rect x="120" y="12" width="5" height="4" fill-opacity="0.8"/><rect x="135" y="12" width="5" height="4" fill-opacity="0.8"/><rect x="145" y="12" width="5" height="4" fill-opacity="0.8"/><rect x="175" y="12" width="10" height="4" fill-opacity="0.8"/><rect x="185" y="12" width="5" height="4" fill-opacity="0.5"/><rect x="210" y="12" width="5" height="4" fill-opacity="0.8"/><rect x="225" y="12" width="5" height="4" fill-opacity="0.25"/><rect x="235" y="12" width="5" height="4" fill-opacity="0.8"/><rect x="250" y="12" width="5" height="4" fill-opacity="0.8"/><rect x="255" y="12" width="5" height="4" fill-opacity="0.5"/><rect x="260" y="12" width="10" height="4" fill-opacity="0.8"/><rect x="275" y="12" width="10" height="4" fill-opacity="0.8"/><rect x="295" y="12" width="5" height="4" fill-opacity="0.8"/><rect x="305" y="12" width="5" height="4" fill-opacity="0.8"/><rect x="315" y="12" width="5" height="4" fill-opacity="0.8"/><rect x="320" y="12" width="5" height="4" fill-opacity="0.5"/><rect x="330" y="12" width="15" height="4" fill-opacity="0.8"/><rect x="5" y="16" width="5" height="4" fill-opacity="0.8"/><rect x="15" y="16" width="5" height="4" fill-opacity="0.8"/><rect x="25" y="16" width="5" height="4" fill-opacity="0.5"/><rect x="30" y="16" width="5" height="4" fill-opacity="0.25"/><rect x="40" y="16" width="15" height="4" fill-opacity="0.5"/><rect x="55" y="16" width="5" height="4" fill-opacity="0.8"/><rect x="60" y="16" width="5" height="4" fill-opacity="0.5"/><rect x="75" y="16" width="5" height="4" fill-opacity="0.5"/><rect x="85" y="16" width="10" height="4" fill-opacity="0.5"/><rect x="100" y="16" width="5" height="4" fill-opacity="0.5"/><rect x="110" y="16" width="5" height="4" fill-opacity="0.5"/><rect x="115" y="16" width="5" height="4" fill-opacity="0.8"/><rect x="130" y="16" width="5" height="4" fill-opacity="0.5"/><rect x="170" y="16" width="5" height="4" fill-opacity="0.5"/><rect x="175" y="16" width="5" height="4" fill-opacity="0.25"/><rect x="180" y="16" width="5" height="4" fill-opacity="0.5"/><rect x="190" y="16" width="5" height="4" fill-opacity="0.25"/><rect x="200" y="16" width="5" height="4" fill-opacity="0.25"/><rect x="210" y="16" width="10" height="4" fill-opacity="0.5"/><rect x="220" y="16" width="5" height="4" fill-opacity="0.25"/><rect x="245" y="16" width="5" height="4" fill-opacity="0.5"/><rect x="255" y="16" width="5" height="4" fill-opacity="0.8"/><rect x="260" y="16" width="15" height="4" fill-opacity="0.5"/><rect x="285" y="16" width="5" height="4" fill-opacity="0.5"/><rect x="290" y="16" width="5" height="4" fill-opacity="0.25"/><rect x="315" y="16" width="5" height="4" fill-opacity="0.5"/><rect x="320" y="16" width="5" height="4" fill-opacity="0.25"/><rect x="330" y="16" width="10" height="4" fill-opacity="0.5"/><rect x="340" y="16" width="5" height="4" fill-opacity="0.8"/><rect x="345" y="16" width="10" height="4" fill-opacity="0.25"/><rect x="360" y="16" width="5" height="4" fill-opacity="0.5"/></g></svg>
<svg class="r" style="left:703px;top:1287.8px" width="90" height="20"><g fill="#2a2a2a"><rect x="15" y="4" width="5" height="4" fill-opacity="0.5"/><rect x="5" y="8" width="5" height="4" fill-opacity="0.8"/><rect x="10" y="8" width="5" height="4" fill-opacity="0.5"/><rect x="20" y="8" width="5" height="4" fill-opacity="0.5"/><rect x="25" y="8" width="5" height="4" fill-opacity="0.8"/><rect x="40" y="8" width="10" height="4" fill-opacity="0.8"/><rect x="50" y="8" width="5" height="4" fill-opacity="0.5"/><rect x="55" y="8" width="5" height="4" fill-opacity="0.8"/><rect x="70" y="8" width="10" height="4" fill-opacity="0.8"/><rect x="85" y="8" width="5" height="4" fill-opacity="0.8"/><rect x="0" y="12" width="10" height="4" fill-opacity="0.8"/><rect x="30" y="12" width="5" height="4" fill-opacity="0.5"/><rect x="35" y="12" width="5" height="4" fill-opacity="0.25"/><rect x="45" y="12" width="10" height="4" fill-opacity="0.5"/><rect x="55" y="12" width="10" height="4" fill-opacity="0.8"/><rect x="70" y="12" width="5" height="4" fill-opacity="0.8"/><rect x="75" y="12" width="5" height="4" fill-opacity="0.5"/><rect x="85" y="12" width="5" height="4" fill-opacity="0.5"/><rect x="0" y="16" width="15" height="4" fill-opacity="0.5"/><rect x="20" y="16" width="5" height="4" fill-opacity="0.8"/><rect x="30" y="16" width="5" height="4" fill-opacity="0.8"/><rect x="35" y="16" width="5" height="4" fill-opacity="0.5"/><rect x="50" y="16" width="5" height="4" fill-opacity="0.5"/><rect x="65" y="16" width="10" height="4" fill-opacity="0.5"/><rect x="80" y="16" width="5" height="4" fill-opacity="0.5"/></g></svg>
<div class="t" style="left:885.00px;top:1287.05px;font-size:20.50px;line-height:20.50px;color:#1e1e1e;font-weight:400;letter-spacing:1.1814322916666669px;">1</div>
<div class="t" style="left:1176.00px;top:1287.05px;font-size:20.50px;line-height:20.50px;color:#1e1e1e;font-weight:400;letter-spacing:1.1814322916666669px;">0.2</div>
<div class="t" style="left:1466.00px;top:1287.05px;font-size:20.50px;line-height:20.50px;color:#1e1e1e;font-weight:400;letter-spacing:1.1814322916666669px;">0</div>
<div class="t" style="left:1757.00px;top:1287.05px;font-size:20.50px;line-height:20.50px;color:#1e1e1e;font-weight:400;letter-spacing:1.1814322916666669px;">2.4</div>
<div class="t" style="left:54.00px;top:1337.90px;font-size:20.50px;line-height:20.50px;color:#1e1e1e;font-weight:400;letter-spacing:1.1814322916666669px;">2024-06-12</div>
<svg class="r" style="left:288px;top:1338.7px" width="185" height="20"><g fill="#2a2a2a"><rect x="10" y="4" width="5" height="4" fill-opacity="0.25"/><rect x="30" y="4" width="5" height="4" fill-opacity="0.25"/><rect x="90" y="4" width="5" height="4" fill-opacity="0.25"/><rect x="145" y="4" width="5" height="4" fill-opacity="0.25"/><rect x="155" y="4" width="5" height="4" fill-opacity="0.25"/><rect x="5" y="8" width="10" height="4" fill-opacity="0.5"/><rect x="20" y="8" width="10" height="4" fill-opacity="0.8"/><rect x="30" y="8" width="5" height="4" fill-opacity="0.5"/><rect x="45" y="8" width="5" height="4" fill-opacity="0.5"/><rect x="50" y="8" width="5" height="4" fill-opacity="0.25"/><rect x="55" y="8" width="5" height="4" fill-opacity="0.5"/><rect x="65" y="8" width="5" height="4" fill-opacity="0.25"/><rect x="95" y="8" width="5" height="4" fill-opacity="0.25"/><rect x="100" y="8" width="5" height="4" fill-opacity="0.8"/><rect x="115" y="8" width="10" height="4" fill-opacity="0.5"/><rect x="130" y="8" width="5" height="4" fill-opacity="0.5"/><rect x="135" y="8" width="5" height="4" fill-opacity="0.25"/><rect x="140" y="8" width="10" height="4" fill-opacity="0.5"/><rect x="155" y="8" width="5" height="4" fill-opacity="0.5"/><rect x="165" y="8" width="5" height="4" fill-opacity="0.8"/><rect x="170" y="8" width="5" height="4" fill-opacity="0.5"/><rect x="0" y="12" width="5" height="4" fill-opacity="0.5"/><rect x="10" y="12" width="10" height="4" fill-opacity="0.25"/><rect x="30" y="12" width="5" height="4" fill-opacity="0.5"/><rect x="55" y="12" width="5" height="4" fill-opacity="0.5"/><rect x="75" y="12" width="5" height="4" fill-opacity="0.5"/><rect x="85" y="12" width="5" height="4" fill-opacity="0.5"/><rect x="105" y="12" width="5" height="4" fill-opacity="0.5"/><rect x="115" y="12" width="10" height="4" fill-opacity="0.5"/><rect x="125" y="12" width="5" height="4" fill-opacity="0.25"/><rect x="130" y="12" width="5" height="4" fill-opacity="0.5"/><rect x="140" y="12" width="5" height="4" fill-opacity="0.5"/><rect x="155" y="12" width="10" height="4" fill-opacity="0.5"/><rect x="165" y="12" width="5" height="4" fill-opacity="0.25"/><rect x="170" y="12" width="5" height="4" fill-opacity="0.5"/><rect x="180" y="12" width="5" height="4" fill-opacity="0.8"/><rect x="10" y="16" width="5" height="4" fill-opacity="0.25"/><rect x="20" y="16" width="10" height="4" fill-opacity="0.5"/><rect x="35" y="16" width="10" height="4" fill-opacity="0.25"/><rect x="50" y="16" width="5" height="4" fill-opacity="0.25"/><rect x="65" y="16" width="5" height="4" fill-opacity="0.5"/><rect x="95" y="16" width="5" height="4" fill-opacity="0.25"/><rect x="100" y="16" width="5" height="4" fill-opacity="0.5"/><rect x="105" y="16" width="5" height="4" fill-opacity="0.25"/><rect x="115" y="16" width="5" height="4" fill-opacity="0.25"/><rect x="125" y="16" width="5" height="4" fill-opacity="0.5"/><rect x="135" y="16" width="10" height="4" fill-opacity="0.5"/><rect x="160" y="16" width="5" height="4" fill-opacity="0.25"/><rect x="170" y="16" width="5" height="4" fill-opacity="0.25"/><rect x="180" y="16" width="5" height="4" fill-opacity="0.25"/></g></svg>
<svg class="r" style="left:703px;top:1338.7px" width="90" height="20"><g fill="#2a2a2a"><rect x="40" y="4" width="5" height="4" fill-opacity="0.5"/><rect x="0" y="8" width="10" height="4" fill-opacity="0.5"/><rect x="15" y="8" width="5" height="4" fill-opacity="0.5"/><rect x="20" y="8" width="5" height="4" fill-opacity="0.25"/><rect x="30" y="8" width="5" height="4" fill-opacity="0.5"/><rect x="55" y="8" width="5" height="4" fill-opacity="0.8"/><rect x="60" y="8" width="5" height="4" fill-opacity="0.5"/><rect x="70" y="8" width="20" height="4" fill-opacity="0.5"/><rect x="10" y="12" width="5" height="4" fill-opacity="0.25"/><rect x="15" y="12" width="10" height="4" fill-opacity="0.5"/><rect x="40" y="12" width="10" height="4" fill-opacity="0.5"/><rect x="55" y="12" width="5" height="4" fill-opacity="0.8"/><rect x="60" y="12" width="5" height="4" fill-opacity="0.5"/><rect x="70" y="12" width="5" height="4" fill-opacity="0.5"/><rect x="80" y="12" width="10" height="4" fill-opacity="0.5"/><rect x="0" y="16" width="5" height="4" fill-opacity="0.5"/><rect x="25" y="16" width="5" height="4" fill-opacity="0.5"/><rect x="50" y="16" width="5" height="4" fill-opacity="0.25"/><rect x="55" y="16" width="15" height="4" fill-opacity="0.5"/><rect x="75" y="16" width="5" height="4" fill-opacity="0.25"/></g></svg>
<div class="t" style="left:885.00px;top:1337.90px;font-size:20.50px;line-height:20.50px;color:#1e1e1e;font-weight:400;letter-spacing:1.1814322916666669px;">121.6</div>
<div class="t" style="left:1176.00px;top:1337.90px;font-size:20.50px;line-height:20.50px;color:#9a9a9a;font-weight:400;letter-spacing:1.1814322916666669px;">null</div>
<div class="t" style="left:1466.00px;top:1337.90px;font-size:20.50px;line-height:20.50px;color:#9a9a9a;font-weight:400;letter-spacing:1.1814322916666669px;">null</div>
<div class="t" style="left:1757.00px;top:1337.90px;font-size:20.50px;line-height:20.50px;color:#9a9a9a;font-weight:400;letter-spacing:1.1814322916666669px;">null</div>
<div class="t" style="left:54.00px;top:1388.75px;font-size:20.50px;line-height:20.50px;color:#1e1e1e;font-weight:400;letter-spacing:1.1814322916666669px;">2024-06-12</div>
<svg class="r" style="left:288px;top:1389.5px" width="185" height="20"><g fill="#2a2a2a"><rect x="0" y="4" width="10" height="4" fill-opacity="0.8"/><rect x="20" y="4" width="5" height="4" fill-opacity="0.25"/><rect x="35" y="4" width="5" height="4" fill-opacity="0.5"/><rect x="45" y="4" width="5" height="4" fill-opacity="0.5"/><rect x="85" y="4" width="15" height="4" fill-opacity="0.8"/><rect x="110" y="4" width="5" height="4" fill-opacity="0.25"/><rect x="120" y="4" width="5" height="4" fill-opacity="0.25"/><rect x="125" y="4" width="5" height="4" fill-opacity="0.8"/><rect x="145" y="4" width="5" height="4" fill-opacity="0.25"/><rect x="155" y="4" width="5" height="4" fill-opacity="0.5"/><rect x="165" y="4" width="5" height="4" fill-opacity="0.25"/><rect x="180" y="4" width="5" height="4" fill-opacity="0.25"/><rect x="0" y="8" width="5" height="4" fill-opacity="0.25"/><rect x="10" y="8" width="15" height="4" fill-opacity="0.8"/><rect x="30" y="8" width="5" height="4" fill-opacity="0.8"/><rect x="40" y="8" width="20" height="4" fill-opacity="0.8"/><rect x="60" y="8" width="5" height="4" fill-opacity="0.5"/><rect x="65" y="8" width="10" height="4" fill-opacity="0.8"/><rect x="75" y="8" width="5" height="4" fill-opacity="0.5"/><rect x="85" y="8" width="5" height="4" fill-opacity="0.5"/><rect x="90" y="8" width="40" height="4" fill-opacity="0.8"/><rect x="135" y="8" width="5" height="4" fill-opacity="0.5"/><rect x="140" y="8" width="5" height="4" fill-opacity="0.8"/><rect x="155" y="8" width="10" height="4" fill-opacity="0.8"/><rect x="165" y="8" width="10" height="4" fill-opacity="0.25"/><rect x="175" y="8" width="10" height="4" fill-opacity="0.8"/><rect x="0" y="12" width="5" height="4" fill-opacity="0.25"/><rect x="15" y="12" width="5" height="4" fill-opacity="0.8"/><rect x="30" y="12" width="5" height="4" fill-opacity="0.25"/><rect x="35" y="12" width="5" height="4" fill-opacity="0.8"/><rect x="50" y="12" width="15" height="4" fill-opacity="0.8"/><rect x="65" y="12" width="5" height="4" fill-opacity="0.25"/><rect x="70" y="12" width="5" height="4" fill-opacity="0.8"/><rect x="90" y="12" width="5" height="4" fill-opacity="0.8"/><rect x="95" y="12" width="5" height="4" fill-opacity="0.5"/><rect x="100" y="12" width="5" height="4" fill-opacity="0.8"/><rect x="105" y="12" width="5" height="4" fill-opacity="0.5"/><rect x="110" y="12" width="5" height="4" fill-opacity="0.8"/><rect x="135" y="12" width="5" height="4" fill-opacity="0.5"/><rect x="140" y="12" width="10" height="4" fill-opacity="0.25"/><rect x="150" y="12" width="5" height="4" fill-opacity="0.5"/><rect x="160" y="12" width="5" height="4" fill-opacity="0.8"/><rect x="165" y="12" width="5" height="4" fill-opacity="0.5"/><rect x="175" y="12" width="5" height="4" fill-opacity="0.8"/><rect x="0" y="16" width="5" height="4" fill-opacity="0.5"/><rect x="10" y="16" width="10" height="4" fill-opacity="0.5"/><rect x="20" y="16" width="5" height="4" fill-opacity="0.8"/><rect x="30" y="16" width="5" height="4" fill-opacity="0.8"/><rect x="45" y="16" width="10" height="4" fill-opacity="0.8"/><rect x="60" y="16" width="10" height="4" fill-opacity="0.8"/><rect x="75" y="16" width="5" height="4" fill-opacity="0.5"/><rect x="85" y="16" width="5" height="4" fill-opacity="0.25"/><rect x="90" y="16" width="5" height="4" fill-opacity="0.5"/><rect x="100" y="16" width="5" height="4" fill-opacity="0.8"/><rect x="120" y="16" width="10" height="4" fill-opacity="0.8"/><rect x="130" y="16" width="5" height="4" fill-opacity="0.5"/><rect x="135" y="16" width="5" height="4" fill-opacity="0.8"/><rect x="140" y="16" width="5" height="4" fill-opacity="0.5"/><rect x="150" y="16" width="10" height="4" fill-opacity="0.8"/><rect x="160" y="16" width="5" height="4" fill-opacity="0.5"/><rect x="165" y="16" width="5" height="4" fill-opacity="0.8"/><rect x="170" y="16" width="5" height="4" fill-opacity="0.5"/></g></svg>
<svg class="r" style="left:703px;top:1389.5px" width="90" height="20"><g fill="#2a2a2a"><rect x="45" y="4" width="5" height="4" fill-opacity="0.25"/><rect x="55" y="4" width="5" height="4" fill-opacity="0.25"/><rect x="0" y="8" width="5" height="4" fill-opacity="0.8"/><rect x="5" y="8" width="5" height="4" fill-opacity="0.25"/><rect x="10" y="8" width="15" height="4" fill-opacity="0.8"/><rect x="25" y="8" width="5" height="4" fill-opacity="0.25"/><rect x="30" y="8" width="20" height="4" fill-opacity="0.8"/><rect x="55" y="8" width="10" height="4" fill-opacity="0.8"/><rect x="75" y="8" width="10" height="4" fill-opacity="0.8"/><rect x="85" y="8" width="5" height="4" fill-opacity="0.25"/><rect x="5" y="12" width="5" height="4" fill-opacity="0.25"/><rect x="15" y="12" width="20" height="4" fill-opacity="0.8"/><rect x="35" y="12" width="5" height="4" fill-opacity="0.5"/><rect x="55" y="12" width="10" height="4" fill-opacity="0.8"/><rect x="70" y="12" width="5" height="4" fill-opacity="0.8"/><rect x="80" y="12" width="5" height="4" fill-opacity="0.8"/><rect x="5" y="16" width="5" height="4" fill-opacity="0.25"/><rect x="10" y="16" width="10" height="4" fill-opacity="0.5"/><rect x="25" y="16" width="5" height="4" fill-opacity="0.8"/><rect x="45" y="16" width="10" height="4" fill-opacity="0.5"/><rect x="60" y="16" width="10" height="4" fill-opacity="0.8"/><rect x="75" y="16" width="5" height="4" fill-opacity="0.5"/></g></svg>
<div class="t" style="left:885.00px;top:1388.75px;font-size:20.50px;line-height:20.50px;color:#1e1e1e;font-weight:400;letter-spacing:1.1814322916666669px;">144.6</div>
<div class="t" style="left:1176.00px;top:1388.75px;font-size:20.50px;line-height:20.50px;color:#9a9a9a;font-weight:400;letter-spacing:1.1814322916666669px;">null</div>
<div class="t" style="left:1466.00px;top:1388.75px;font-size:20.50px;line-height:20.50px;color:#9a9a9a;font-weight:400;letter-spacing:1.1814322916666669px;">null</div>
<div class="t" style="left:1757.00px;top:1388.75px;font-size:20.50px;line-height:20.50px;color:#9a9a9a;font-weight:400;letter-spacing:1.1814322916666669px;">null</div>
<div class="t" style="left:54.00px;top:1439.60px;font-size:20.50px;line-height:20.50px;color:#1e1e1e;font-weight:400;letter-spacing:1.1814322916666669px;">2024-06-12</div>
<svg class="r" style="left:288px;top:1440.4px" width="120" height="20"><g fill="#2a2a2a"><rect x="0" y="4" width="5" height="4" fill-opacity="0.8"/><rect x="10" y="4" width="5" height="4" fill-opacity="0.8"/><rect x="25" y="4" width="5" height="4" fill-opacity="0.5"/><rect x="55" y="4" width="5" height="4" fill-opacity="0.25"/><rect x="105" y="4" width="5" height="4" fill-opacity="0.5"/><rect x="110" y="4" width="10" height="4" fill-opacity="0.8"/><rect x="0" y="8" width="5" height="4" fill-opacity="0.8"/><rect x="5" y="8" width="10" height="4" fill-opacity="0.5"/><rect x="20" y="8" width="5" height="4" fill-opacity="0.8"/><rect x="25" y="8" width="5" height="4" fill-opacity="0.5"/><rect x="30" y="8" width="10" height="4" fill-opacity="0.8"/><rect x="40" y="8" width="5" height="4" fill-opacity="0.5"/><rect x="55" y="8" width="5" height="4" fill-opacity="0.5"/><rect x="65" y="8" width="10" height="4" fill-opacity="0.5"/><rect x="85" y="8" width="10" height="4" fill-opacity="0.5"/><rect x="95" y="8" width="5" height="4" fill-opacity="0.25"/><rect x="100" y="8" width="10" height="4" fill-opacity="0.5"/><rect x="0" y="12" width="5" height="4" fill-opacity="0.8"/><rect x="5" y="12" width="5" height="4" fill-opacity="0.5"/><rect x="10" y="12" width="5" height="4" fill-opacity="0.25"/><rect x="15" y="12" width="5" height="4" fill-opacity="0.8"/><rect x="30" y="12" width="5" height="4" fill-opacity="0.8"/><rect x="50" y="12" width="5" height="4" fill-opacity="0.5"/><rect x="90" y="12" width="10" height="4" fill-opacity="0.5"/><rect x="110" y="12" width="5" height="4" fill-opacity="0.5"/><rect x="115" y="12" width="5" height="4" fill-opacity="0.25"/><rect x="0" y="16" width="5" height="4" fill-opacity="0.5"/><rect x="10" y="16" width="5" height="4" fill-opacity="0.5"/><rect x="20" y="16" width="10" height="4" fill-opacity="0.5"/><rect x="45" y="16" width="5" height="4" fill-opacity="0.5"/><rect x="55" y="16" width="10" height="4" fill-opacity="0.5"/><rect x="65" y="16" width="5" height="4" fill-opacity="0.8"/><rect x="70" y="16" width="5" height="4" fill-opacity="0.5"/><rect x="85" y="16" width="5" height="4" fill-opacity="0.8"/><rect x="105" y="16" width="5" height="4" fill-opacity="0.5"/><rect x="110" y="16" width="5" height="4" fill-opacity="0.25"/></g></svg>
<svg class="r" style="left:703px;top:1440.4px" width="90" height="20"><g fill="#2a2a2a"><rect x="15" y="4" width="5" height="4" fill-opacity="0.5"/><rect x="40" y="4" width="5" height="4" fill-opacity="0.8"/><rect x="55" y="4" width="5" height="4" fill-opacity="0.25"/><rect x="0" y="8" width="15" height="4" fill-opacity="0.8"/><rect x="15" y="8" width="5" height="4" fill-opacity="0.5"/><rect x="30" y="8" width="5" height="4" fill-opacity="0.8"/><rect x="40" y="8" width="10" height="4" fill-opacity="0.8"/><rect x="55" y="8" width="5" height="4" fill-opacity="0.8"/><rect x="70" y="8" width="5" height="4" fill-opacity="0.8"/><rect x="80" y="8" width="5" height="4" fill-opacity="0.8"/><rect x="5" y="12" width="5" height="4" fill-opacity="0.8"/><rect x="25" y="12" width="5" height="4" fill-opacity="0.8"/><rect x="40" y="12" width="10" height="4" fill-opacity="0.5"/><rect x="60" y="12" width="5" height="4" fill-opacity="0.8"/><rect x="75" y="12" width="5" height="4" fill-opacity="0.5"/><rect x="85" y="12" width="5" height="4" fill-opacity="0.8"/><rect x="10" y="16" width="10" height="4" fill-opacity="0.5"/><rect x="20" y="16" width="20" height="4" fill-opacity="0.8"/><rect x="40" y="16" width="5" height="4" fill-opacity="0.5"/><rect x="50" y="16" width="10" height="4" fill-opacity="0.5"/><rect x="60" y="16" width="5" height="4" fill-opacity="0.8"/><rect x="65" y="16" width="5" height="4" fill-opacity="0.5"/><rect x="80" y="16" width="5" height="4" fill-opacity="0.5"/></g></svg>
<div class="t" style="left:885.00px;top:1439.60px;font-size:20.50px;line-height:20.50px;color:#1e1e1e;font-weight:400;letter-spacing:1.1814322916666669px;">0</div>
<div class="t" style="left:1176.00px;top:1439.60px;font-size:20.50px;line-height:20.50px;color:#9a9a9a;font-weight:400;letter-spacing:1.1814322916666669px;">null</div>
<div class="t" style="left:1466.00px;top:1439.60px;font-size:20.50px;line-height:20.50px;color:#9a9a9a;font-weight:400;letter-spacing:1.1814322916666669px;">null</div>
<div class="t" style="left:1757.00px;top:1439.60px;font-size:20.50px;line-height:20.50px;color:#9a9a9a;font-weight:400;letter-spacing:1.1814322916666669px;">null</div>
<div class="t" style="left:54.00px;top:1490.45px;font-size:20.50px;line-height:20.50px;color:#1e1e1e;font-weight:400;letter-spacing:1.1814322916666669px;">2024-06-12</div>
<svg class="r" style="left:288px;top:1491.2px" width="115" height="20"><g fill="#2a2a2a"><rect x="0" y="4" width="5" height="4" fill-opacity="0.5"/><rect x="10" y="4" width="5" height="4" fill-opacity="0.5"/><rect x="30" y="4" width="5" height="4" fill-opacity="0.25"/><rect x="35" y="4" width="5" height="4" fill-opacity="0.8"/><rect x="40" y="4" width="5" height="4" fill-opacity="0.25"/><rect x="70" y="4" width="5" height="4" fill-opacity="0.5"/><rect x="80" y="4" width="5" height="4" fill-opacity="0.5"/><rect x="90" y="4" width="5" height="4" fill-opacity="0.5"/><rect x="100" y="4" width="10" height="4" fill-opacity="0.5"/><rect x="0" y="8" width="5" height="4" fill-opacity="0.5"/><rect x="35" y="8" width="5" height="4" fill-opacity="0.8"/><rect x="40" y="8" width="15" height="4" fill-opacity="0.5"/><rect x="70" y="8" width="5" height="4" fill-opacity="0.5"/><rect x="80" y="8" width="5" height="4" fill-opacity="0.5"/><rect x="90" y="8" width="10" height="4" fill-opacity="0.5"/><rect x="0" y="12" width="5" height="4" fill-opacity="0.5"/><rect x="10" y="12" width="5" height="4" fill-opacity="0.5"/><rect x="35" y="12" width="10" height="4" fill-opacity="0.5"/><rect x="50" y="12" width="5" height="4" fill-opacity="0.8"/><rect x="70" y="12" width="5" height="4" fill-opacity="0.8"/><rect x="80" y="12" width="5" height="4" fill-opacity="0.5"/><rect x="85" y="12" width="5" height="4" fill-opacity="0.25"/><rect x="95" y="12" width="5" height="4" fill-opacity="0.8"/><rect x="105" y="12" width="5" height="4" fill-opacity="0.5"/><rect x="15" y="16" width="5" height="4" fill-opacity="0.25"/><rect x="20" y="16" width="5" height="4" fill-opacity="0.5"/><rect x="25" y="16" width="5" height="4" fill-opacity="0.25"/><rect x="30" y="16" width="5" height="4" fill-opacity="0.5"/><rect x="40" y="16" width="10" height="4" fill-opacity="0.5"/><rect x="60" y="16" width="5" height="4" fill-opacity="0.25"/><rect x="75" y="16" width="10" height="4" fill-opacity="0.5"/><rect x="85" y="16" width="5" height="4" fill-opacity="0.25"/><rect x="105" y="16" width="5" height="4" fill-opacity="0.25"/></g></svg>
<svg class="r" style="left:703px;top:1491.2px" width="90" height="20"><g fill="#2a2a2a"><rect x="40" y="4" width="5" height="4" fill-opacity="0.5"/><rect x="0" y="8" width="5" height="4" fill-opacity="0.5"/><rect x="10" y="8" width="5" height="4" fill-opacity="0.25"/><rect x="15" y="8" width="10" height="4" fill-opacity="0.5"/><rect x="30" y="8" width="5" height="4" fill-opacity="0.5"/><rect x="35" y="8" width="5" height="4" fill-opacity="0.25"/><rect x="40" y="8" width="10" height="4" fill-opacity="0.5"/><rect x="50" y="8" width="5" height="4" fill-opacity="0.25"/><rect x="55" y="8" width="5" height="4" fill-opacity="0.8"/><rect x="70" y="8" width="5" height="4" fill-opacity="0.5"/><rect x="75" y="8" width="5" height="4" fill-opacity="0.8"/><rect x="80" y="8" width="5" height="4" fill-opacity="0.5"/><rect x="10" y="12" width="5" height="4" fill-opacity="0.25"/><rect x="15" y="12" width="5" height="4" fill-opacity="0.5"/><rect x="40" y="12" width="5" height="4" fill-opacity="0.5"/><rect x="50" y="12" width="5" height="4" fill-opacity="0.5"/><rect x="60" y="12" width="5" height="4" fill-opacity="0.5"/><rect x="70" y="12" width="5" height="4" fill-opacity="0.5"/><rect x="80" y="12" width="10" height="4" fill-opacity="0.5"/><rect x="10" y="16" width="5" height="4" fill-opacity="0.25"/><rect x="30" y="16" width="5" height="4" fill-opacity="0.25"/><rect x="35" y="16" width="5" height="4" fill-opacity="0.5"/><rect x="50" y="16" width="5" height="4" fill-opacity="0.25"/><rect x="60" y="16" width="10" height="4" fill-opacity="0.5"/><rect x="75" y="16" width="5" height="4" fill-opacity="0.25"/></g></svg>
<div class="t" style="left:885.00px;top:1490.45px;font-size:20.50px;line-height:20.50px;color:#1e1e1e;font-weight:400;letter-spacing:1.1814322916666669px;">138.7</div>
<div class="t" style="left:1176.00px;top:1490.45px;font-size:20.50px;line-height:20.50px;color:#9a9a9a;font-weight:400;letter-spacing:1.1814322916666669px;">null</div>
<div class="t" style="left:1466.00px;top:1490.45px;font-size:20.50px;line-height:20.50px;color:#9a9a9a;font-weight:400;letter-spacing:1.1814322916666669px;">null</div>
<div class="t" style="left:1757.00px;top:1490.45px;font-size:20.50px;line-height:20.50px;color:#9a9a9a;font-weight:400;letter-spacing:1.1814322916666669px;">null</div>
<div class="t" style="left:54.00px;top:1541.30px;font-size:20.50px;line-height:20.50px;color:#1e1e1e;font-weight:400;letter-spacing:1.1814322916666669px;">2024-06-12</div>
<svg class="r" style="left:288px;top:1542.1px" width="120" height="20"><g fill="#2a2a2a"><rect x="0" y="4" width="15" height="4" fill-opacity="0.8"/><rect x="25" y="4" width="5" height="4" fill-opacity="0.8"/><rect x="45" y="4" width="5" height="4" fill-opacity="0.25"/><rect x="55" y="4" width="5" height="4" fill-opacity="0.25"/><rect x="65" y="4" width="5" height="4" fill-opacity="0.25"/><rect x="85" y="4" width="10" height="4" fill-opacity="0.5"/><rect x="100" y="4" width="5" height="4" fill-opacity="0.8"/><rect x="105" y="4" width="5" height="4" fill-opacity="0.5"/><rect x="110" y="4" width="5" height="4" fill-opacity="0.25"/><rect x="115" y="4" width="5" height="4" fill-opacity="0.8"/><rect x="0" y="8" width="5" height="4" fill-opacity="0.8"/><rect x="10" y="8" width="10" height="4" fill-opacity="0.8"/><rect x="20" y="8" width="5" height="4" fill-opacity="0.25"/><rect x="25" y="8" width="15" height="4" fill-opacity="0.8"/><rect x="45" y="8" width="20" height="4" fill-opacity="0.8"/><rect x="70" y="8" width="5" height="4" fill-opacity="0.5"/><rect x="75" y="8" width="5" height="4" fill-opacity="0.25"/><rect x="95" y="8" width="5" height="4" fill-opacity="0.5"/><rect x="105" y="8" width="5" height="4" fill-opacity="0.8"/><rect x="115" y="8" width="5" height="4" fill-opacity="0.8"/><rect x="0" y="12" width="5" height="4" fill-opacity="0.8"/><rect x="15" y="12" width="10" height="4" fill-opacity="0.8"/><rect x="30" y="12" width="20" height="4" fill-opacity="0.8"/><rect x="55" y="12" width="15" height="4" fill-opacity="0.8"/><rect x="70" y="12" width="5" height="4" fill-opacity="0.25"/><rect x="85" y="12" width="5" height="4" fill-opacity="0.8"/><rect x="90" y="12" width="5" height="4" fill-opacity="0.5"/><rect x="100" y="12" width="5" height="4" fill-opacity="0.25"/><rect x="105" y="12" width="10" height="4" fill-opacity="0.8"/><rect x="115" y="12" width="5" height="4" fill-opacity="0.5"/><rect x="0" y="16" width="5" height="4" fill-opacity="0.5"/><rect x="10" y="16" width="5" height="4" fill-opacity="0.5"/><rect x="15" y="16" width="5" height="4" fill-opacity="0.8"/><rect x="40" y="16" width="20" height="4" fill-opacity="0.8"/><rect x="60" y="16" width="5" height="4" fill-opacity="0.5"/><rect x="85" y="16" width="5" height="4" fill-opacity="0.8"/><rect x="95" y="16" width="5" height="4" fill-opacity="0.8"/><rect x="110" y="16" width="5" height="4" fill-opacity="0.5"/><rect x="115" y="16" width="5" height="4" fill-opacity="0.25"/></g></svg>
<svg class="r" style="left:703px;top:1542.1px" width="90" height="20"><g fill="#2a2a2a"><rect x="15" y="4" width="5" height="4" fill-opacity="0.8"/><rect x="45" y="4" width="5" height="4" fill-opacity="0.25"/><rect x="55" y="4" width="5" height="4" fill-opacity="0.25"/><rect x="0" y="8" width="5" height="4" fill-opacity="0.8"/><rect x="5" y="8" width="5" height="4" fill-opacity="0.25"/><rect x="10" y="8" width="40" height="4" fill-opacity="0.8"/><rect x="50" y="8" width="5" height="4" fill-opacity="0.5"/><rect x="55" y="8" width="5" height="4" fill-opacity="0.25"/><rect x="75" y="8" width="10" height="4" fill-opacity="0.8"/><rect x="85" y="8" width="5" height="4" fill-opacity="0.25"/><rect x="5" y="12" width="5" height="4" fill-opacity="0.8"/><rect x="15" y="12" width="10" height="4" fill-opacity="0.8"/><rect x="25" y="12" width="5" height="4" fill-opacity="0.25"/><rect x="30" y="12" width="5" height="4" fill-opacity="0.8"/><rect x="35" y="12" width="5" height="4" fill-opacity="0.25"/><rect x="45" y="12" width="5" height="4" fill-opacity="0.8"/><rect x="55" y="12" width="5" height="4" fill-opacity="0.8"/><rect x="60" y="12" width="10" height="4" fill-opacity="0.25"/><rect x="70" y="12" width="10" height="4" fill-opacity="0.8"/><rect x="0" y="16" width="5" height="4" fill-opacity="0.8"/><rect x="5" y="16" width="5" height="4" fill-opacity="0.25"/><rect x="10" y="16" width="5" height="4" fill-opacity="0.8"/><rect x="25" y="16" width="15" height="4" fill-opacity="0.8"/><rect x="45" y="16" width="10" height="4" fill-opacity="0.5"/><rect x="55" y="16" width="5" height="4" fill-opacity="0.8"/><rect x="65" y="16" width="5" height="4" fill-opacity="0.8"/><rect x="80" y="16" width="5" height="4" fill-opacity="0.5"/></g></svg>
<div class="t" style="left:885.00px;top:1541.30px;font-size:20.50px;line-height:20.50px;color:#9a9a9a;font-weight:400;letter-spacing:1.1814322916666669px;">null</div>
<div class="t" style="left:1176.00px;top:1541.30px;font-size:20.50px;line-height:20.50px;color:#9a9a9a;font-weight:400;letter-spacing:1.1814322916666669px;">null</div>
<div class="t" style="left:1466.00px;top:1541.30px;font-size:20.50px;line-height:20.50px;color:#9a9a9a;font-weight:400;letter-spacing:1.1814322916666669px;">null</div>
<div class="t" style="left:1757.00px;top:1541.30px;font-size:20.50px;line-height:20.50px;color:#9a9a9a;font-weight:400;letter-spacing:1.1814322916666669px;">null</div>
<div class="t" style="left:54.00px;top:1592.15px;font-size:20.50px;line-height:20.50px;color:#1e1e1e;font-weight:400;letter-spacing:1.1814322916666669px;">2024-06-10</div>
<svg class="r" style="left:288px;top:1592.9px" width="185" height="20"><g fill="#2a2a2a"><rect x="5" y="4" width="10" height="4" fill-opacity="0.8"/><rect x="25" y="4" width="5" height="4" fill-opacity="0.5"/><rect x="45" y="4" width="5" height="4" fill-opacity="0.25"/><rect x="85" y="4" width="5" height="4" fill-opacity="0.5"/><rect x="90" y="4" width="5" height="4" fill-opacity="0.8"/><rect x="110" y="4" width="5" height="4" fill-opacity="0.25"/><rect x="125" y="4" width="5" height="4" fill-opacity="0.8"/><rect x="155" y="4" width="5" height="4" fill-opacity="0.5"/><rect x="5" y="8" width="5" height="4" fill-opacity="0.5"/><rect x="10" y="8" width="35" height="4" fill-opacity="0.8"/><rect x="45" y="8" width="5" height="4" fill-opacity="0.5"/><rect x="55" y="8" width="5" height="4" fill-opacity="0.8"/><rect x="60" y="8" width="5" height="4" fill-opacity="0.5"/><rect x="85" y="8" width="5" height="4" fill-opacity="0.5"/><rect x="90" y="8" width="5" height="4" fill-opacity="0.8"/><rect x="100" y="8" width="5" height="4" fill-opacity="0.8"/><rect x="105" y="8" width="5" height="4" fill-opacity="0.5"/><rect x="140" y="8" width="5" height="4" fill-opacity="0.8"/><rect x="145" y="8" width="5" height="4" fill-opacity="0.5"/><rect x="155" y="8" width="5" height="4" fill-opacity="0.8"/><rect x="165" y="8" width="15" height="4" fill-opacity="0.8"/><rect x="0" y="12" width="10" height="4" fill-opacity="0.8"/><rect x="10" y="12" width="5" height="4" fill-opacity="0.5"/><rect x="25" y="12" width="10" height="4" fill-opacity="0.8"/><rect x="40" y="12" width="5" height="4" fill-opacity="0.8"/><rect x="50" y="12" width="5" height="4" fill-opacity="0.8"/><rect x="55" y="12" width="5" height="4" fill-opacity="0.5"/><rect x="60" y="12" width="5" height="4" fill-opacity="0.8"/><rect x="65" y="12" width="5" height="4" fill-opacity="0.25"/><rect x="90" y="12" width="5" height="4" fill-opacity="0.8"/><rect x="100" y="12" width="5" height="4" fill-opacity="0.5"/><rect x="115" y="12" width="10" height="4" fill-opacity="0.8"/><rect x="130" y="12" width="5" height="4" fill-opacity="0.5"/><rect x="140" y="12" width="5" height="4" fill-opacity="0.8"/><rect x="150" y="12" width="10" height="4" fill-opacity="0.5"/><rect x="165" y="12" width="5" height="4" fill-opacity="0.5"/><rect x="175" y="12" width="5" height="4" fill-opacity="0.5"/><rect x="10" y="16" width="5" height="4" fill-opacity="0.8"/><rect x="25" y="16" width="5" height="4" fill-opacity="0.5"/><rect x="30" y="16" width="5" height="4" fill-opacity="0.25"/><rect x="35" y="16" width="5" height="4" fill-opacity="0.8"/><rect x="40" y="16" width="5" height="4" fill-opacity="0.25"/><rect x="45" y="16" width="5" height="4" fill-opacity="0.8"/><rect x="50" y="16" width="10" height="4" fill-opacity="0.5"/><rect x="60" y="16" width="10" height="4" fill-opacity="0.8"/><rect x="75" y="16" width="5" height="4" fill-opacity="0.5"/><rect x="110" y="16" width="5" height="4" fill-opacity="0.8"/><rect x="115" y="16" width="10" height="4" fill-opacity="0.5"/><rect x="125" y="16" width="5" height="4" fill-opacity="0.8"/><rect x="160" y="16" width="5" height="4" fill-opacity="0.5"/><rect x="165" y="16" width="5" height="4" fill-opacity="0.8"/><rect x="175" y="16" width="5" height="4" fill-opacity="0.5"/></g></svg>
<svg class="r" style="left:703px;top:1592.9px" width="90" height="20"><g fill="#2a2a2a"><rect x="15" y="4" width="5" height="4" fill-opacity="0.5"/><rect x="45" y="4" width="5" height="4" fill-opacity="0.25"/><rect x="55" y="4" width="5" height="4" fill-opacity="0.25"/><rect x="0" y="8" width="5" height="4" fill-opacity="0.5"/><rect x="5" y="8" width="5" height="4" fill-opacity="0.8"/><rect x="15" y="8" width="5" height="4" fill-opacity="0.5"/><rect x="25" y="8" width="10" height="4" fill-opacity="0.8"/><rect x="40" y="8" width="10" height="4" fill-opacity="0.8"/><rect x="50" y="8" width="5" height="4" fill-opacity="0.5"/><rect x="55" y="8" width="10" height="4" fill-opacity="0.8"/><rect x="70" y="8" width="10" height="4" fill-opacity="0.8"/><rect x="85" y="8" width="5" height="4" fill-opacity="0.8"/><rect x="0" y="12" width="10" height="4" fill-opacity="0.8"/><rect x="15" y="12" width="5" height="4" fill-opacity="0.5"/><rect x="35" y="12" width="5" height="4" fill-opacity="0.25"/><rect x="40" y="12" width="5" height="4" fill-opacity="0.8"/><rect x="50" y="12" width="5" height="4" fill-opacity="0.5"/><rect x="60" y="12" width="5" height="4" fill-opacity="0.8"/><rect x="70" y="12" width="5" height="4" fill-opacity="0.8"/><rect x="75" y="12" width="10" height="4" fill-opacity="0.5"/><rect x="0" y="16" width="5" height="4" fill-opacity="0.5"/><rect x="35" y="16" width="10" height="4" fill-opacity="0.5"/><rect x="50" y="16" width="5" height="4" fill-opacity="0.5"/><rect x="60" y="16" width="5" height="4" fill-opacity="0.5"/><rect x="70" y="16" width="10" height="4" fill-opacity="0.5"/><rect x="85" y="16" width="5" height="4" fill-opacity="0.5"/></g></svg>
<div class="t" style="left:885.00px;top:1592.15px;font-size:20.50px;line-height:20.50px;color:#1e1e1e;font-weight:400;letter-spacing:1.1814322916666669px;">40.6</div>
<div class="t" style="left:1176.00px;top:1592.15px;font-size:20.50px;line-height:20.50px;color:#9a9a9a;font-weight:400;letter-spacing:1.1814322916666669px;">null</div>
<div class="t" style="left:1466.00px;top:1592.15px;font-size:20.50px;line-height:20.50px;color:#9a9a9a;font-weight:400;letter-spacing:1.1814322916666669px;">null</div>
<div class="t" style="left:1757.00px;top:1592.15px;font-size:20.50px;line-height:20.50px;color:#9a9a9a;font-weight:400;letter-spacing:1.1814322916666669px;">null</div>
<div class="t" style="left:54.00px;top:1643.00px;font-size:20.50px;line-height:20.50px;color:#1e1e1e;font-weight:400;letter-spacing:1.1814322916666669px;">2024-06-10</div>
<svg class="r" style="left:288px;top:1643.8px" width="115" height="20"><g fill="#2a2a2a"><rect x="0" y="4" width="5" height="4" fill-opacity="0.5"/><rect x="10" y="4" width="5" height="4" fill-opacity="0.5"/><rect x="30" y="4" width="5" height="4" fill-opacity="0.5"/><rect x="35" y="4" width="5" height="4" fill-opacity="0.8"/><rect x="70" y="4" width="5" height="4" fill-opacity="0.5"/><rect x="80" y="4" width="5" height="4" fill-opacity="0.5"/><rect x="95" y="4" width="5" height="4" fill-opacity="0.25"/><rect x="105" y="4" width="5" height="4" fill-opacity="0.8"/><rect x="110" y="4" width="5" height="4" fill-opacity="0.25"/><rect x="5" y="8" width="5" height="4" fill-opacity="0.5"/><rect x="15" y="8" width="5" height="4" fill-opacity="0.5"/><rect x="20" y="8" width="5" height="4" fill-opacity="0.25"/><rect x="30" y="8" width="5" height="4" fill-opacity="0.8"/><rect x="45" y="8" width="5" height="4" fill-opacity="0.25"/><rect x="80" y="8" width="5" height="4" fill-opacity="0.5"/><rect x="105" y="8" width="5" height="4" fill-opacity="0.5"/><rect x="0" y="12" width="5" height="4" fill-opacity="0.5"/><rect x="10" y="12" width="5" height="4" fill-opacity="0.5"/><rect x="25" y="12" width="20" height="4" fill-opacity="0.5"/><rect x="50" y="12" width="5" height="4" fill-opacity="0.8"/><rect x="70" y="12" width="5" height="4" fill-opacity="0.5"/><rect x="80" y="12" width="5" height="4" fill-opacity="0.5"/><rect x="95" y="12" width="5" height="4" fill-opacity="0.5"/><rect x="0" y="16" width="5" height="4" fill-opacity="0.25"/><rect x="10" y="16" width="5" height="4" fill-opacity="0.25"/><rect x="20" y="16" width="5" height="4" fill-opacity="0.5"/><rect x="35" y="16" width="5" height="4" fill-opacity="0.25"/><rect x="40" y="16" width="5" height="4" fill-opacity="0.5"/><rect x="55" y="16" width="5" height="4" fill-opacity="0.25"/><rect x="75" y="16" width="10" height="4" fill-opacity="0.5"/><rect x="85" y="16" width="5" height="4" fill-opacity="0.25"/><rect x="100" y="16" width="5" height="4" fill-opacity="0.25"/></g></svg>
<svg class="r" style="left:703px;top:1643.8px" width="90" height="20"><g fill="#2a2a2a"><rect x="15" y="4" width="5" height="4" fill-opacity="0.5"/><rect x="40" y="4" width="5" height="4" fill-opacity="0.5"/><rect x="0" y="8" width="10" height="4" fill-opacity="0.5"/><rect x="10" y="8" width="5" height="4" fill-opacity="0.25"/><rect x="15" y="8" width="5" height="4" fill-opacity="0.5"/><rect x="20" y="8" width="5" height="4" fill-opacity="0.25"/><rect x="25" y="8" width="10" height="4" fill-opacity="0.5"/><rect x="40" y="8" width="5" height="4" fill-opacity="0.8"/><rect x="45" y="8" width="5" height="4" fill-opacity="0.5"/><rect x="50" y="8" width="5" height="4" fill-opacity="0.25"/><rect x="55" y="8" width="10" height="4" fill-opacity="0.5"/><rect x="70" y="8" width="20" height="4" fill-opacity="0.5"/><rect x="0" y="12" width="25" height="4" fill-opacity="0.5"/><rect x="25" y="12" width="5" height="4" fill-opacity="0.8"/><rect x="30" y="12" width="5" height="4" fill-opacity="0.5"/><rect x="40" y="12" width="15" height="4" fill-opacity="0.5"/><rect x="75" y="12" width="5" height="4" fill-opacity="0.25"/><rect x="80" y="12" width="10" height="4" fill-opacity="0.5"/><rect x="0" y="16" width="5" height="4" fill-opacity="0.25"/><rect x="20" y="16" width="15" height="4" fill-opacity="0.5"/><rect x="50" y="16" width="15" height="4" fill-opacity="0.25"/><rect x="65" y="16" width="5" height="4" fill-opacity="0.5"/></g></svg>
<div class="t" style="left:885.00px;top:1643.00px;font-size:20.50px;line-height:20.50px;color:#1e1e1e;font-weight:400;letter-spacing:1.1814322916666669px;">0</div>
<div class="t" style="left:1176.00px;top:1643.00px;font-size:20.50px;line-height:20.50px;color:#9a9a9a;font-weight:400;letter-spacing:1.1814322916666669px;">null</div>
<div class="t" style="left:1466.00px;top:1643.00px;font-size:20.50px;line-height:20.50px;color:#9a9a9a;font-weight:400;letter-spacing:1.1814322916666669px;">null</div>
<div class="t" style="left:1757.00px;top:1643.00px;font-size:20.50px;line-height:20.50px;color:#9a9a9a;font-weight:400;letter-spacing:1.1814322916666669px;">null</div>
<div class="t" style="left:54.00px;top:1693.85px;font-size:20.50px;line-height:20.50px;color:#1e1e1e;font-weight:400;letter-spacing:1.1814322916666669px;">2024-06-09</div>
<svg class="r" style="left:288px;top:1694.6px" width="365" height="20"><g fill="#2a2a2a"><rect x="0" y="4" width="5" height="4" fill-opacity="0.8"/><rect x="10" y="4" width="5" height="4" fill-opacity="0.5"/><rect x="20" y="4" width="10" height="4" fill-opacity="0.8"/><rect x="30" y="4" width="10" height="4" fill-opacity="0.5"/><rect x="40" y="4" width="15" height="4" fill-opacity="0.8"/><rect x="65" y="4" width="5" height="4" fill-opacity="0.5"/><rect x="70" y="4" width="5" height="4" fill-opacity="0.25"/><rect x="75" y="4" width="5" height="4" fill-opacity="0.5"/><rect x="80" y="4" width="5" height="4" fill-opacity="0.8"/><rect x="90" y="4" width="10" height="4" fill-opacity="0.8"/><rect x="100" y="4" width="5" height="4" fill-opacity="0.5"/><rect x="105" y="4" width="10" height="4" fill-opacity="0.8"/><rect x="125" y="4" width="10" height="4" fill-opacity="0.8"/><rect x="135" y="4" width="10" height="4" fill-opacity="0.25"/><rect x="170" y="4" width="5" height="4" fill-opacity="0.25"/><rect x="190" y="4" width="5" height="4" fill-opacity="0.25"/><rect x="205" y="4" width="5" height="4" fill-opacity="0.8"/><rect x="210" y="4" width="5" height="4" fill-opacity="0.25"/><rect x="240" y="4" width="5" height="4" fill-opacity="0.5"/><rect x="265" y="4" width="5" height="4" fill-opacity="0.8"/><rect x="295" y="4" width="5" height="4" fill-opacity="0.25"/><rect x="310" y="4" width="5" height="4" fill-opacity="0.25"/><rect x="315" y="4" width="5" height="4" fill-opacity="0.8"/><rect x="0" y="8" width="10" height="4" fill-opacity="0.8"/><rect x="10" y="8" width="5" height="4" fill-opacity="0.25"/><rect x="20" y="8" width="5" height="4" fill-opacity="0.25"/><rect x="35" y="8" width="5" height="4" fill-opacity="0.8"/><rect x="55" y="8" width="5" height="4" fill-opacity="0.25"/><rect x="70" y="8" width="5" height="4" fill-opacity="0.8"/><rect x="80" y="8" width="5" height="4" fill-opacity="0.8"/><rect x="85" y="8" width="5" height="4" fill-opacity="0.5"/><rect x="90" y="8" width="5" height="4" fill-opacity="0.25"/><rect x="95" y="8" width="5" height="4" fill-opacity="0.8"/><rect x="105" y="8" width="5" height="4" fill-opacity="0.8"/><rect x="110" y="8" width="10" height="4" fill-opacity="0.5"/><rect x="120" y="8" width="5" height="4" fill-opacity="0.25"/><rect x="125" y="8" width="25" height="4" fill-opacity="0.8"/><rect x="150" y="8" width="5" height="4" fill-opacity="0.25"/><rect x="155" y="8" width="15" height="4" fill-opacity="0.8"/><rect x="175" y="8" width="5" height="4" fill-opacity="0.8"/><rect x="185" y="8" width="15" height="4" fill-opacity="0.8"/><rect x="205" y="8" width="5" height="4" fill-opacity="0.8"/><rect x="210" y="8" width="5" height="4" fill-opacity="0.25"/><rect x="215" y="8" width="15" height="4" fill-opacity="0.8"/><rect x="230" y="8" width="5" height="4" fill-opacity="0.25"/><rect x="250" y="8" width="5" height="4" fill-opacity="0.8"/><rect x="260" y="8" width="20" height="4" fill-opacity="0.8"/><rect x="285" y="8" width="5" height="4" fill-opacity="0.8"/><rect x="290" y="8" width="5" height="4" fill-opacity="0.5"/><rect x="295" y="8" width="5" height="4" fill-opacity="0.8"/><rect x="305" y="8" width="5" height="4" fill-opacity="0.8"/><rect x="315" y="8" width="25" height="4" fill-opacity="0.8"/><rect x="340" y="8" width="5" height="4" fill-opacity="0.25"/><rect x="345" y="8" width="5" height="4" fill-opacity="0.8"/><rect x="355" y="8" width="5" height="4" fill-opacity="0.25"/><rect x="0" y="12" width="5" height="4" fill-opacity="0.8"/><rect x="10" y="12" width="5" height="4" fill-opacity="0.8"/><rect x="20" y="12" width="5" height="4" fill-opacity="0.8"/><rect x="40" y="12" width="5" height="4" fill-opacity="0.25"/><rect x="45" y="12" width="5" height="4" fill-opacity="0.8"/><rect x="50" y="12" width="5" height="4" fill-opacity="0.5"/><rect x="55" y="12" width="5" height="4" fill-opacity="0.25"/><rect x="60" y="12" width="5" height="4" fill-opacity="0.8"/><rect x="65" y="12" width="5" height="4" fill-opacity="0.25"/><rect x="75" y="12" width="5" height="4" fill-opacity="0.8"/><rect x="80" y="12" width="5" height="4" fill-opacity="0.5"/><rect x="105" y="12" width="5" height="4" fill-opacity="0.8"/><rect x="110" y="12" width="10" height="4" fill-opacity="0.5"/><rect x="120" y="12" width="5" height="4" fill-opacity="0.25"/><rect x="130" y="12" width="5" height="4" fill-opacity="0.25"/><rect x="135" y="12" width="10" height="4" fill-opacity="0.8"/><rect x="150" y="12" width="20" height="4" fill-opacity="0.8"/><rect x="170" y="12" width="5" height="4" fill-opacity="0.5"/><rect x="175" y="12" width="20" height="4" fill-opacity="0.8"/><rect x="195" y="12" width="5" height="4" fill-opacity="0.5"/><rect x="210" y="12" width="10" height="4" fill-opacity="0.8"/><rect x="220" y="12" width="5" height="4" fill-opacity="0.25"/><rect x="230" y="12" width="10" height="4" fill-opacity="0.8"/><rect x="245" y="12" width="15" height="4" fill-opacity="0.8"/><rect x="265" y="12" width="5" height="4" fill-opacity="0.8"/><rect x="270" y="12" width="5" height="4" fill-opacity="0.5"/><rect x="275" y="12" width="5" height="4" fill-opacity="0.8"/><rect x="280" y="12" width="5" height="4" fill-opacity="0.25"/><rect x="290" y="12" width="10" height="4" fill-opacity="0.8"/><rect x="300" y="12" width="5" height="4" fill-opacity="0.25"/><rect x="315" y="12" width="10" height="4" fill-opacity="0.25"/><rect x="325" y="12" width="10" height="4" fill-opacity="0.8"/><rect x="340" y="12" width="10" height="4" fill-opacity="0.8"/><rect x="355" y="12" width="10" height="4" fill-opacity="0.8"/><rect x="0" y="16" width="5" height="4" fill-opacity="0.8"/><rect x="5" y="16" width="5" height="4" fill-opacity="0.5"/><rect x="15" y="16" width="15" height="4" fill-opacity="0.8"/><rect x="30" y="16" width="10" height="4" fill-opacity="0.5"/><rect x="70" y="16" width="5" height="4" fill-opacity="0.25"/><rect x="80" y="16" width="5" height="4" fill-opacity="0.8"/><rect x="85" y="16" width="5" height="4" fill-opacity="0.5"/><rect x="90" y="16" width="10" height="4" fill-opacity="0.8"/><rect x="105" y="16" width="5" height="4" fill-opacity="0.8"/><rect x="110" y="16" width="10" height="4" fill-opacity="0.5"/><rect x="125" y="16" width="10" height="4" fill-opacity="0.5"/><rect x="140" y="16" width="5" height="4" fill-opacity="0.8"/><rect x="150" y="16" width="5" height="4" fill-opacity="0.5"/><rect x="155" y="16" width="5" height="4" fill-opacity="0.8"/><rect x="165" y="16" width="5" height="4" fill-opacity="0.5"/><rect x="170" y="16" width="5" height="4" fill-opacity="0.8"/><rect x="180" y="16" width="5" height="4" fill-opacity="0.8"/><rect x="185" y="16" width="5" height="4" fill-opacity="0.5"/><rect x="190" y="16" width="5" height="4" fill-opacity="0.8"/><rect x="210" y="16" width="5" height="4" fill-opacity="0.5"/><rect x="215" y="16" width="10" height="4" fill-opacity="0.8"/><rect x="230" y="16" width="5" height="4" fill-opacity="0.5"/><rect x="240" y="16" width="10" height="4" fill-opacity="0.8"/><rect x="250" y="16" width="10" height="4" fill-opacity="0.5"/><rect x="260" y="16" width="5" height="4" fill-opacity="0.8"/><rect x="265" y="16" width="5" height="4" fill-opacity="0.5"/><rect x="275" y="16" width="5" height="4" fill-opacity="0.8"/><rect x="285" y="16" width="5" height="4" fill-opacity="0.25"/><rect x="290" y="16" width="5" height="4" fill-opacity="0.5"/><rect x="300" y="16" width="5" height="4" fill-opacity="0.8"/><rect x="305" y="16" width="5" height="4" fill-opacity="0.5"/><rect x="330" y="16" width="5" height="4" fill-opacity="0.8"/><rect x="335" y="16" width="5" height="4" fill-opacity="0.25"/><rect x="340" y="16" width="25" height="4" fill-opacity="0.8"/></g></svg>
<svg class="r" style="left:703px;top:1694.6px" width="90" height="20"><g fill="#2a2a2a"><rect x="15" y="4" width="5" height="4" fill-opacity="0.8"/><rect x="20" y="4" width="5" height="4" fill-opacity="0.25"/><rect x="40" y="4" width="5" height="4" fill-opacity="0.8"/><rect x="55" y="4" width="5" height="4" fill-opacity="0.25"/><rect x="85" y="4" width="5" height="4" fill-opacity="0.25"/><rect x="0" y="8" width="15" height="4" fill-opacity="0.8"/><rect x="20" y="8" width="10" height="4" fill-opacity="0.8"/><rect x="30" y="8" width="5" height="4" fill-opacity="0.25"/><rect x="35" y="8" width="5" height="4" fill-opacity="0.8"/><rect x="40" y="8" width="5" height="4" fill-opacity="0.25"/><rect x="45" y="8" width="5" height="4" fill-opacity="0.8"/><rect x="50" y="8" width="5" height="4" fill-opacity="0.5"/><rect x="55" y="8" width="10" height="4" fill-opacity="0.8"/><rect x="70" y="8" width="10" height="4" fill-opacity="0.8"/><rect x="80" y="8" width="5" height="4" fill-opacity="0.25"/><rect x="85" y="8" width="5" height="4" fill-opacity="0.8"/><rect x="0" y="12" width="35" height="4" fill-opacity="0.8"/><rect x="40" y="12" width="15" height="4" fill-opacity="0.8"/><rect x="55" y="12" width="5" height="4" fill-opacity="0.25"/><rect x="60" y="12" width="5" height="4" fill-opacity="0.8"/><rect x="70" y="12" width="5" height="4" fill-opacity="0.8"/><rect x="0" y="16" width="5" height="4" fill-opacity="0.8"/><rect x="10" y="16" width="5" height="4" fill-opacity="0.5"/><rect x="15" y="16" width="10" height="4" fill-opacity="0.8"/><rect x="30" y="16" width="15" height="4" fill-opacity="0.8"/><rect x="45" y="16" width="10" height="4" fill-opacity="0.5"/><rect x="55" y="16" width="5" height="4" fill-opacity="0.8"/><rect x="70" y="16" width="5" height="4" fill-opacity="0.5"/><rect x="75" y="16" width="10" height="4" fill-opacity="0.8"/></g></svg>
<div class="t" style="left:885.00px;top:1693.85px;font-size:20.50px;line-height:20.50px;color:#1e1e1e;font-weight:400;letter-spacing:1.1814322916666669px;">52.3</div>
<div class="t" style="left:1176.00px;top:1693.85px;font-size:20.50px;line-height:20.50px;color:#9a9a9a;font-weight:400;letter-spacing:1.1814322916666669px;">null</div>
<div class="t" style="left:1466.00px;top:1693.85px;font-size:20.50px;line-height:20.50px;color:#9a9a9a;font-weight:400;letter-spacing:1.1814322916666669px;">null</div>
<div class="t" style="left:1757.00px;top:1693.85px;font-size:20.50px;line-height:20.50px;color:#9a9a9a;font-weight:400;letter-spacing:1.1814322916666669px;">null</div>
<div class="t" style="left:30.50px;top:1767.99px;font-size:20.80px;line-height:20.80px;color:#a0a4aa;font-weight:400;letter-spacing:0.511px;">790 entries, showing</div>
<div class="r" style="left:241px;top:1749.5px;width:99px;height:57px;border:1px solid #cdd1d6;border-radius:5px;background:#fff"></div>
<div class="t" style="left:262.00px;top:1767.99px;font-size:20.80px;line-height:20.80px;color:#a0a4aa;font-weight:400;letter-spacing:2.147px;">500</div>
<svg class="r" style="left:307px;top:1775px" width="11" height="6" viewBox="0 0 11 6"><path d="M0.5 0.5 L10.5 0.5 L5.5 5.5 Z" fill="#a0a4aa"/></svg>
<div class="t" style="left:350.00px;top:1767.99px;font-size:20.80px;line-height:20.80px;color:#a0a4aa;font-weight:400;letter-spacing:0.555px;">per page</div>
<svg class="r" style="left:0;top:0" width="2000" height="1841" viewBox="0 0 2000 1841"><path d="M1829.9 1771.3 L1823.6 1778 L1829.9 1784.7" fill="none" stroke="#e2e3e5" stroke-width="3.6" stroke-linecap="round" stroke-linejoin="round"/><path d="M1841.1 1771.3 L1834.8 1778 L1841.1 1784.7" fill="none" stroke="#e2e3e5" stroke-width="3.6" stroke-linecap="round" stroke-linejoin="round"/><path d="M1862.5 1771.3 L1856.2 1778 L1862.5 1784.7" fill="none" stroke="#e2e3e5" stroke-width="3.6" stroke-linecap="round" stroke-linejoin="round"/><path d="M1922.5 1771.3 L1928.8 1778 L1922.5 1784.7" fill="none" stroke="#a2a7ad" stroke-width="3.6" stroke-linecap="round" stroke-linejoin="round"/><path d="M1942.7 1771.3 L1949.0 1778 L1942.7 1784.7" fill="none" stroke="#a2a7ad" stroke-width="3.6" stroke-linecap="round" stroke-linejoin="round"/><path d="M1953.9 1771.3 L1960.2 1778 L1953.9 1784.7" fill="none" stroke="#a2a7ad" stroke-width="3.6" stroke-linecap="round" stroke-linejoin="round"/></svg>
<div class="t" style="left:1877.50px;top:1768.25px;font-size:21.20px;line-height:21.20px;color:#a3a3a3;font-weight:400;">1/2</div>
<div class="r" style="left:1987px;top:373px;width:12px;height:303px;background:#fff;border-radius:2px"></div>
<div class="r" style="left:1988px;top:374px;width:10px;height:301px;background:#7b7b7b;border:1px solid #626262;border-radius:1px"></div>
<div class="r" style="left:1987px;top:679px;width:12px;height:192px;background:#fff;border-radius:2px"></div>
<div class="r" style="left:1988px;top:680px;width:10px;height:190px;background:#7b7b7b;border:1px solid #626262;border-radius:1px"></div>
</body></html>
